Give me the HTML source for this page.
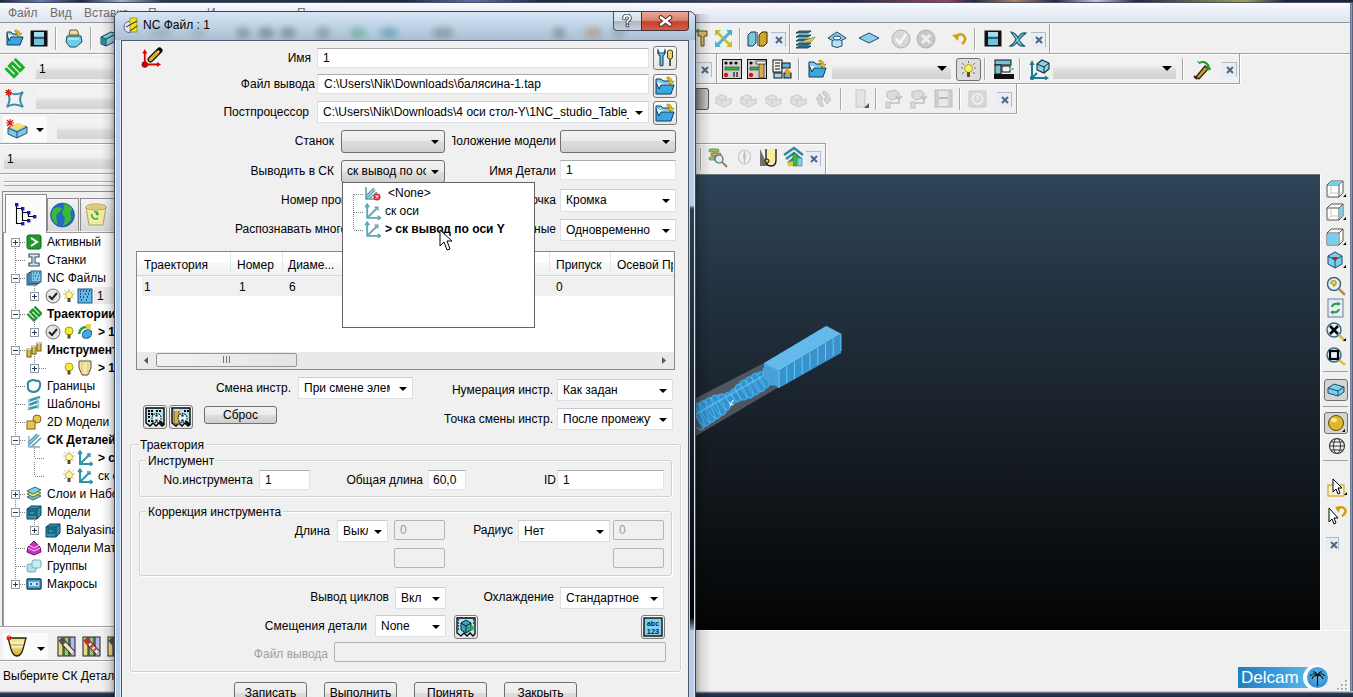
<!DOCTYPE html>
<html><head><meta charset="utf-8">
<style>
*{margin:0;padding:0;box-sizing:border-box}
html,body{width:1353px;height:697px;overflow:hidden;background:#f0f0f0;font-family:"Liberation Sans",sans-serif;font-size:12px;color:#000}
.a{position:absolute}
.t{position:absolute;white-space:nowrap;line-height:14px}
.r{text-align:right}
.fld{position:absolute;background:#fff;border:1px solid #dfe3e8;border-top-color:#a9adb3}
.fld span{position:absolute;left:5px;top:3px;line-height:14px;white-space:nowrap}
.dis{position:absolute;background:#f0f0f0;border:1px solid #b4b4b4;border-radius:2px}
.dis span{position:absolute;left:5px;top:3px;line-height:14px;color:#9a9a9a}
.cmb{position:absolute;border:1px solid #707070;border-radius:3px;background:linear-gradient(#f2f2f2 0,#ebebeb 50%,#dddddd 50%,#cfcfcf 100%)}
.dd{position:absolute;background:#fff;border:1px solid #dcdfe3;border-top-color:#c8ccd0}
.dd span,.cmb span{position:absolute;left:5px;top:3px;line-height:14px;white-space:nowrap;overflow:hidden}
.arr{position:absolute;width:0;height:0;border-left:4px solid transparent;border-right:4px solid transparent;border-top:4px solid #000}
.btn{position:absolute;border:1px solid #707070;border-radius:3px;background:linear-gradient(#f2f2f2 0,#ebebeb 50%,#dddddd 50%,#cfcfcf 100%);text-align:center;line-height:15px}
.ibtn{position:absolute;border:1px solid #7a7a7a;border-radius:3px;background:linear-gradient(#fafafa,#e4e4e4)}
.sep{position:absolute;width:2px;border-left:1px solid #a0a0a0;border-right:1px solid #fff}
.hl{position:absolute;height:2px;border-top:1px solid #a0a0a0;border-bottom:1px solid #fff}
.xb{position:absolute;width:15px;height:16px;border:1px solid #b9c9dc;border-left-color:#fff;border-top-color:#fff;background:#e8eef5;color:#4a6a8c;font-size:13px;font-weight:bold;line-height:13px;text-align:center}
.grp{position:absolute;border:1px solid #d0d0d0;border-radius:3px;box-shadow:inset 1px 1px 0 #fff,1px 1px 0 #fff}
.gl{position:absolute;background:#f0f0f0;padding:0 2px;line-height:14px;white-space:nowrap}
.tree .t{line-height:14px}
</style></head><body>


<!-- top desktop strip -->
<div class="a" style="left:0;top:0;width:1353px;height:3px;background:linear-gradient(90deg,#1c2740 0,#6a78b0 3%,#1c2740 6%,#a0b0c8 9%,#2a3550 12%,#1d2a45 30%,#5a70a8 35%,#1d2a45 40%,#3a4560 55%,#202a48 62%,#a04050 70%,#202a48 72%,#b08060 75%,#202a48 78%,#c0c8d8 81%,#202a48 84%,#a0a050 92%,#1a2540 95%)"></div><div class="a" style="left:0;top:2px;width:1353px;height:1px;background:#4a5268"></div>
<!-- menubar -->
<div class="a" style="left:0;top:3px;width:1350px;height:20px;background:linear-gradient(#fbfbfd 0,#eef1f8 30%,#dde3ee 100%)"></div>
<div class="a" style="left:0;top:22px;width:1350px;height:1px;background:#8f96a0"></div>
<div class="t" style="left:8px;top:6px;color:#6d6d6d">Файл</div>
<div class="t" style="left:50px;top:6px;color:#6d6d6d">Вид</div>
<div class="t" style="left:84px;top:6px;color:#6d6d6d">Вставка</div>

<!-- right window border -->
<div class="a" style="left:1350px;top:3px;width:3px;height:694px;background:linear-gradient(90deg,#5f6b85,#8895b0,#3d4865)"></div>
<!-- bottom border -->
<div class="a" style="left:0;top:691px;width:1353px;height:6px;background:linear-gradient(#b8c4d4 0,#b8c4d4 1px,#2e3a55 2px,#1d2740)"></div>

<!-- viewport -->
<div class="a" style="left:695px;top:174px;width:625px;height:456px;background:linear-gradient(#2e4558 0%,#243444 22%,#1b242d 48%,#0f1418 74%,#030405 100%);border-top:1px solid #6f757c"></div>

<svg class="a" style="left:695px;top:174px" width="625" height="456" viewBox="0 0 625 456"><polygon points="1,224 69,189 84,213 1,262" fill="#7a7f88" opacity=".55"/><polygon points="7.4,255.3 30.1,240.1 37.6,231.2 44.0,227.6 54.9,224.8 70.7,215.8 74.5,211.4 79.4,210.8 84.9,207.7 75.1,190.3 69.5,193.5 66.6,197.4 60.8,198.4 45.0,207.4 37.0,215.4 30.7,219.0 19.3,220.9 -5.4,232.7" fill="#3a8ccc"/><ellipse cx="1.0" cy="244.0" rx="13.0" ry="5.9" transform="rotate(60.3 1.0 244.0)" fill="none" stroke="#3fd8ff" stroke-width=".8" opacity=".75"/><ellipse cx="6.6" cy="240.8" rx="12.5" ry="5.6" transform="rotate(60.3 6.6 240.8)" fill="none" stroke="#3fd8ff" stroke-width=".8" opacity=".75"/><ellipse cx="12.3" cy="237.6" rx="12.0" ry="5.4" transform="rotate(60.3 12.3 237.6)" fill="none" stroke="#3fd8ff" stroke-width=".8" opacity=".75"/><ellipse cx="17.9" cy="234.4" rx="11.6" ry="5.2" transform="rotate(60.3 17.9 234.4)" fill="none" stroke="#3fd8ff" stroke-width=".8" opacity=".75"/><ellipse cx="23.6" cy="231.1" rx="11.1" ry="5.0" transform="rotate(60.3 23.6 231.1)" fill="none" stroke="#3fd8ff" stroke-width=".8" opacity=".75"/><ellipse cx="29.2" cy="227.9" rx="9.1" ry="4.1" transform="rotate(60.3 29.2 227.9)" fill="none" stroke="#3fd8ff" stroke-width=".8" opacity=".75"/><ellipse cx="34.9" cy="224.7" rx="7.0" ry="3.1" transform="rotate(60.3 34.9 224.7)" fill="none" stroke="#3fd8ff" stroke-width=".8" opacity=".75"/><ellipse cx="40.5" cy="221.5" rx="7.0" ry="3.1" transform="rotate(60.3 40.5 221.5)" fill="none" stroke="#3fd8ff" stroke-width=".8" opacity=".75"/><ellipse cx="46.1" cy="218.3" rx="8.8" ry="4.0" transform="rotate(60.3 46.1 218.3)" fill="none" stroke="#3fd8ff" stroke-width=".8" opacity=".75"/><ellipse cx="51.8" cy="215.1" rx="10.0" ry="4.5" transform="rotate(60.3 51.8 215.1)" fill="none" stroke="#3fd8ff" stroke-width=".8" opacity=".75"/><ellipse cx="57.4" cy="211.9" rx="10.0" ry="4.5" transform="rotate(60.3 57.4 211.9)" fill="none" stroke="#3fd8ff" stroke-width=".8" opacity=".75"/><ellipse cx="63.1" cy="208.6" rx="10.0" ry="4.5" transform="rotate(60.3 63.1 208.6)" fill="none" stroke="#3fd8ff" stroke-width=".8" opacity=".75"/><ellipse cx="68.7" cy="205.4" rx="8.8" ry="3.9" transform="rotate(60.3 68.7 205.4)" fill="none" stroke="#3fd8ff" stroke-width=".8" opacity=".75"/><ellipse cx="74.4" cy="202.2" rx="9.9" ry="4.5" transform="rotate(60.3 74.4 202.2)" fill="none" stroke="#3fd8ff" stroke-width=".8" opacity=".75"/><ellipse cx="80.0" cy="199.0" rx="10.0" ry="4.5" transform="rotate(60.3 80.0 199.0)" fill="none" stroke="#3fd8ff" stroke-width=".8" opacity=".75"/><line x1="1.0" y1="240.0" x2="80.0" y2="195.0" stroke="#60c8f0" stroke-width="1.5" opacity=".7"/><polygon points="69,189 131,152 146,160 84,197" fill="#66b8ea"/><polygon points="84,197 146,160 146,179 84,214" fill="#3d90cc"/><polygon points="69,189 84,197 84,214 69,205" fill="#4aa0d8"/><line x1="84.0" y1="197.0" x2="84.0" y2="214.0" stroke="#44e0ff" stroke-width=".9"/><line x1="69.0" y1="189.0" x2="84.0" y2="197.0" stroke="#44d0f8" stroke-width=".6"/><line x1="91.8" y1="192.4" x2="91.8" y2="209.4" stroke="#44e0ff" stroke-width=".9"/><line x1="76.8" y1="184.4" x2="91.8" y2="192.4" stroke="#44d0f8" stroke-width=".6"/><line x1="99.5" y1="187.8" x2="99.5" y2="204.8" stroke="#44e0ff" stroke-width=".9"/><line x1="84.5" y1="179.8" x2="99.5" y2="187.8" stroke="#44d0f8" stroke-width=".6"/><line x1="107.2" y1="183.1" x2="107.2" y2="200.1" stroke="#44e0ff" stroke-width=".9"/><line x1="92.2" y1="175.1" x2="107.2" y2="183.1" stroke="#44d0f8" stroke-width=".6"/><line x1="115.0" y1="178.5" x2="115.0" y2="195.5" stroke="#44e0ff" stroke-width=".9"/><line x1="100.0" y1="170.5" x2="115.0" y2="178.5" stroke="#44d0f8" stroke-width=".6"/><line x1="122.8" y1="173.9" x2="122.8" y2="190.9" stroke="#44e0ff" stroke-width=".9"/><line x1="107.8" y1="165.9" x2="122.8" y2="173.9" stroke="#44d0f8" stroke-width=".6"/><line x1="130.5" y1="169.2" x2="130.5" y2="186.2" stroke="#44e0ff" stroke-width=".9"/><line x1="115.5" y1="161.2" x2="130.5" y2="169.2" stroke="#44d0f8" stroke-width=".6"/><line x1="138.2" y1="164.6" x2="138.2" y2="181.6" stroke="#44e0ff" stroke-width=".9"/><line x1="123.2" y1="156.6" x2="138.2" y2="164.6" stroke="#44d0f8" stroke-width=".6"/><line x1="146.0" y1="160.0" x2="146.0" y2="177.0" stroke="#44e0ff" stroke-width=".9"/><line x1="131.0" y1="152.0" x2="146.0" y2="160.0" stroke="#44d0f8" stroke-width=".6"/><path d="M34 228 l4 3 M38 226 l-3 6" stroke="#fff" stroke-width="1"/></svg>
<!-- right vertical toolbar panel -->
<div class="a" id="rtb" style="left:1320px;top:174px;width:30px;height:456px;background:#f0f0f0;border-left:1px solid #fff"></div>

<!-- status area bottom line -->
<div class="a" style="left:695px;top:630px;width:655px;height:1px;background:#fdfdfd"></div>

<!-- Delcam logo -->
<div class="a" style="left:1238px;top:667px;width:70px;height:21px;background:linear-gradient(90deg,#1f7fc0,#3b9ee0 60%,#58b5ea)"></div>
<div class="t" style="left:1241px;top:669px;font-size:17px;line-height:18px;color:#fff">Delcam</div>
<div class="a" style="left:1303px;top:665px;width:25px;height:25px;border-radius:50%;background:#fff"></div>
<div class="a" style="left:1307px;top:667px;width:21px;height:21px;border-radius:50%;background:radial-gradient(circle at 50% 40%,#5fb8ea,#2a83c4)"></div><svg class="a" style="left:1307px;top:667px" width="21" height="21" viewBox="0 0 21 21"><path d="M10.5 8 V19 M10.5 8 Q6 5 3 9 M10.5 8 Q15 5 18 9 M10.5 9 Q7 7 5 12 M10.5 9 Q14 7 16 12 M10.5 8 Q8 4 6 5 M10.5 8 Q13 4 15 5" fill="none" stroke="#111" stroke-width="1.1"/></svg>

<div class="a" style="left:1345px;top:680px;width:2px;height:2px;background:#a8b0bc;box-shadow:1px 1px 0 #fff"></div><div class="a" style="left:1345px;top:684px;width:2px;height:2px;background:#a8b0bc;box-shadow:1px 1px 0 #fff"></div><div class="a" style="left:1341px;top:684px;width:2px;height:2px;background:#a8b0bc;box-shadow:1px 1px 0 #fff"></div><div class="a" style="left:1345px;top:688px;width:2px;height:2px;background:#a8b0bc;box-shadow:1px 1px 0 #fff"></div><div class="a" style="left:1341px;top:688px;width:2px;height:2px;background:#a8b0bc;box-shadow:1px 1px 0 #fff"></div><div class="a" style="left:1337px;top:688px;width:2px;height:2px;background:#a8b0bc;box-shadow:1px 1px 0 #fff"></div>
<!-- LEFT PANEL -->
<svg class="a" style="left:6px;top:29px" width="18" height="17" viewBox="0 0 18 17"><path d="M1 5 L1 16 L14 16 L17 8 L5 8 L3 12z" fill="#3aa8e0" stroke="#0f3a5a"/><path d="M1 5 L1 3 L5 3 L7 5 L12 5 L12 8" fill="#7acaf0" stroke="#0f3a5a"/><path d="M9 1 Q14 1 14 5 L16 4 L13 8 L10 4 L12 4 Q12 3 9 3z" fill="#f0c020" stroke="#a07000" stroke-width=".6"/></svg>
<svg class="a" style="left:30px;top:30px" width="18" height="17" viewBox="0 0 18 17"><rect x="0.5" y="0.5" width="17" height="16" fill="#111"/><rect x="4" y="2" width="10" height="13" fill="#6ac4e0"/><rect x="4" y="7" width="10" height="2" fill="#3a5a6a"/><rect x="4" y="2" width="10" height="4" fill="#a8dcec"/></svg>
<div class="a" style="left:55px;top:27px;width:1px;height:23px;background:#a6a6a6"></div><div class="a" style="left:56px;top:27px;width:1px;height:23px;background:#fff"></div>
<svg class="a" style="left:65px;top:29px" width="18" height="19" viewBox="0 0 18 19"><path d="M5 1 H12 L14 6 H4z" fill="#f0e0a0" stroke="#3a3a20" stroke-width=".8"/><path d="M2 7 H16 L17 13 L11 18 H5 L1 13z" fill="#6ad0e8" stroke="#1a4a60"/><path d="M3 10 H14" stroke="#e8f8fc"/></svg>
<div class="a" style="left:90px;top:27px;width:1px;height:23px;background:#a6a6a6"></div><div class="a" style="left:91px;top:27px;width:1px;height:23px;background:#fff"></div>
<svg class="a" style="left:100px;top:30px" width="16" height="17" viewBox="0 0 16 17"><path d="M1 7 L11 2 L16 4 L16 11 L6 16 L1 14z" fill="#8ad0e0" stroke="#0a3a50"/><path d="M1 7 L6 9 L16 4 M6 9 V16" fill="none" stroke="#0a3a50"/><path d="M1.5 7.5 L6 9.5 L6 15.5 L1.5 13.5z" fill="#2a8aa0"/></svg>
<div class="t" style="left:148px;top:6px;color:#777">П</div>
<div class="t" style="left:207px;top:6px;color:#777">И</div>
<div class="t" style="left:297px;top:6px;color:#777">П</div>
<div class="a" style="left:0;top:53px;width:115px;height:1px;background:#a0a0a0"></div>
<div class="a" style="left:0;top:54px;width:115px;height:1px;background:#fff"></div>
<div class="a" style="left:0;top:83px;width:115px;height:1px;background:#a0a0a0"></div>
<div class="a" style="left:0;top:84px;width:115px;height:1px;background:#fff"></div>
<div class="a" style="left:0;top:113px;width:115px;height:1px;background:#a0a0a0"></div>
<div class="a" style="left:0;top:114px;width:115px;height:1px;background:#fff"></div>
<div class="a" style="left:0;top:143px;width:115px;height:1px;background:#a0a0a0"></div>
<div class="a" style="left:0;top:144px;width:115px;height:1px;background:#fff"></div>
<div class="a" style="left:0;top:173px;width:115px;height:1px;background:#a0a0a0"></div>
<div class="a" style="left:0;top:174px;width:115px;height:1px;background:#fff"></div>
<div class="a" style="left:36px;top:59px;width:80px;height:20px;background:linear-gradient(#f4f4f4 0,#f0f0f0 40%,#dcdcdc 60%,#d4d4d4 100%)"></div><div class="t" style="left:39px;top:62px;">1</div>
<div class="a" style="left:36px;top:89px;width:80px;height:20px;background:linear-gradient(#f4f4f4 0,#f0f0f0 40%,#dcdcdc 60%,#d4d4d4 100%)"></div>
<div class="a" style="left:57px;top:119px;width:60px;height:20px;background:linear-gradient(#f4f4f4 0,#f0f0f0 40%,#dcdcdc 60%,#d4d4d4 100%)"></div>
<div class="a" style="left:4px;top:149px;width:112px;height:20px;background:linear-gradient(#f4f4f4 0,#f0f0f0 40%,#dcdcdc 60%,#d4d4d4 100%)"></div><div class="t" style="left:7px;top:152px;">1</div>
<svg class="a" style="left:3px;top:58px" width="22" height="22" viewBox="0 0 20 20"><path d="M3 10 L10 17 L12.8 14.2 L5.8 7.2 L8.6 4.4 L15.6 11.4 L18.4 8.6 L11.4 1.6" fill="none" stroke="#1eb02a" stroke-width="2.7" stroke-linecap="round"/></svg>
<svg class="a" style="left:3px;top:88px" width="22" height="22" viewBox="0 0 22 22"><path d="M4 3 Q12 9 20 4 Q14 11 20 19 Q11 14 4 19 Q9 11 4 3z" fill="none" stroke="#3a8fa5" stroke-width="2"/><path d="M3 2l5 5M8 2L3 7M5.5 1v7M2 4.5h7" stroke="#d02020" stroke-width="1.2"/></svg>
<div class="a" style="left:3px;top:116px;width:44px;height:26px;background:#fbfbfb"></div>
<svg class="a" style="left:5px;top:118px" width="24" height="22" viewBox="0 0 24 22"><path d="M3 10 L13 6 L22 9 L22 15 L12 20 L3 16z" fill="#7ec8e0" stroke="#264f6a"/><path d="M3 10 L12 14 L22 9 M12 14 V20" fill="none" stroke="#264f6a"/><path d="M4 9 L13 5 L21 8 L12 12z" fill="#f2e070"/><path d="M2 2l6 6M8 2L2 8M5 1v8M1 5h8" stroke="#e02010" stroke-width="1.2"/></svg>
<div class="arr" style="left:36px;top:128px;border-left-width:4px;border-right-width:4px;border-top-width:4px"></div>
<div class="a" style="left:4px;top:181px;width:112px;height:1px;background:#a8a8a8"></div>
<div class="a" style="left:4px;top:185px;width:112px;height:1px;background:#a8a8a8"></div>
<div class="a" style="left:4px;top:182px;width:112px;height:1px;background:#fff"></div>
<div class="a" style="left:2px;top:191px;width:120px;height:437px;border:1px solid #8a8a8a;border-right:none;background:#f0f0f0"></div>
<div class="a" style="left:3px;top:232px;width:120px;height:394px;background:#fff;border-top:1px solid #9a9a9a;border-left:1px solid #9a9a9a"></div>
<div class="a" style="left:47px;top:198px;width:32px;height:33px;border:1px solid #8a8a8a;border-bottom:none;background:linear-gradient(#f3f3f3,#d8d8d8)"></div>
<div class="a" style="left:80px;top:198px;width:40px;height:33px;border:1px solid #8a8a8a;border-bottom:none;background:linear-gradient(#f3f3f3,#d8d8d8)"></div>
<div class="a" style="left:5px;top:194px;width:42px;height:39px;border:1px solid #8a8a8a;border-bottom:none;background:#fcfcfc"></div>
<svg class="a" style="left:13px;top:201px" width="25" height="26" viewBox="0 0 25 26"><path d="M3.5 3.5 V22.5 H9.5 M3.5 7.5 H9.5 V19.5 H15.5 M9.5 11.5 H15.5 V15.5 H21.5" fill="none" stroke="#000" stroke-width="1.1"/><rect x="2" y="2" width="3.4" height="3.4" fill="#1818d0"/><rect x="8" y="6" width="3.4" height="3.4" fill="#1818d0"/><rect x="14" y="10" width="3.4" height="3.4" fill="#1818d0"/><rect x="20" y="14" width="3.4" height="3.4" fill="#1818d0"/><rect x="14" y="18" width="3.4" height="3.4" fill="#1818d0"/><rect x="8" y="21" width="3.4" height="3.4" fill="#1818d0"/></svg>
<svg class="a" style="left:49px;top:202px" width="27" height="26" viewBox="0 0 27 26"><circle cx="13.5" cy="13" r="12" fill="#1f6cc0"/><path d="M4 7 Q9 4 13 6 Q12 10 9 11 Q6 14 8 19 Q9 23 7 22 Q2 17 2.5 12z M14 2 Q20 2 24 7 Q21 9 21 12 Q24 16 20 20 Q16 24 14 23 Q17 18 15 14 Q12 12 14 8 Q16 5 14 2z" fill="#3cb83c"/><circle cx="13.5" cy="13" r="12" fill="none" stroke="#1a4a80" stroke-width=".6"/></svg>
<svg class="a" style="left:84px;top:202px" width="24" height="25" viewBox="0 0 24 25"><path d="M2 5 H22 L19 23 H5z" fill="#f3eaa0" stroke="#b0a060"/><ellipse cx="12" cy="5" rx="10" ry="3" fill="#ece0a0" stroke="#b0a060"/><ellipse cx="12" cy="5" rx="8" ry="2" fill="#d8cc80"/><path d="M10 10 Q14 9 14 13 M14 13 l-2 -1.5 M9 16 Q12 18 14 16 M8 12 Q7 14 9 16" fill="none" stroke="#3aa83a" stroke-width="1.6"/></svg>
<div class="a" style="left:15px;top:246px;width:1px;height:338px;background-image:linear-gradient(#808080 50%,transparent 50%);background-size:1px 2px"></div>
<div class="a" style="left:16px;top:242px;width:10px;height:1px;background-image:linear-gradient(90deg,#808080 50%,transparent 50%);background-size:2px 1px"></div>
<svg class="a" style="left:11px;top:238px" width="9" height="9" viewBox="0 0 9 9"><rect x="0.5" y="0.5" width="8" height="8" fill="#fdfdfd" stroke="#8e9aa8"/><path d="M2 4.5h5" stroke="#2a3a5a"/><path d="M4.5 2v5" stroke="#2a3a5a"/></svg>
<svg class="a" style="left:26px;top:234px" width="16" height="16" viewBox="0 0 16 16"><rect x="1" y="1" width="14" height="14" rx="2" fill="#1e9a2a" stroke="#0d6a18"/><path d="M5 4 L11 8 L5 12" fill="none" stroke="#fff" stroke-width="2"/></svg>
<div class="t" style="left:47px;top:235px;">Активный</div>
<div class="a" style="left:16px;top:260px;width:10px;height:1px;background-image:linear-gradient(90deg,#808080 50%,transparent 50%);background-size:2px 1px"></div>
<svg class="a" style="left:26px;top:252px" width="16" height="16" viewBox="0 0 16 16"><path d="M3 2h10v3H9v6h4v3H3v-3h3V5H3z" fill="#d9e6ee" stroke="#34505f" stroke-width="1.2"/><rect x="6" y="6" width="3" height="4" fill="#8fb3c5"/></svg>
<div class="t" style="left:47px;top:253px;">Станки</div>
<div class="a" style="left:16px;top:278px;width:10px;height:1px;background-image:linear-gradient(90deg,#808080 50%,transparent 50%);background-size:2px 1px"></div>
<svg class="a" style="left:11px;top:274px" width="9" height="9" viewBox="0 0 9 9"><rect x="0.5" y="0.5" width="8" height="8" fill="#fdfdfd" stroke="#8e9aa8"/><path d="M2 4.5h5" stroke="#2a3a5a"/></svg>
<svg class="a" style="left:26px;top:270px" width="16" height="16" viewBox="0 0 16 16"><rect x="1" y="4" width="10" height="11" fill="#5aa7d8" stroke="#27577a"/><rect x="3" y="2.5" width="10" height="11" fill="#6cb8e4" stroke="#27577a"/><rect x="5" y="1" width="10" height="11" fill="#7cc6ee" stroke="#27577a"/><path d="M7 3h1M10 3h1M13 3h1M7 6h1M9 6h1M12 6h1M7 9h1M11 9h1" stroke="#163a55" stroke-width="1.2"/></svg>
<div class="t" style="left:47px;top:271px;">NC Файлы</div>
<div class="a" style="left:34px;top:282px;width:1px;height:14px;background-image:linear-gradient(#808080 50%,transparent 50%);background-size:1px 2px"></div>
<svg class="a" style="left:30px;top:292px" width="9" height="9" viewBox="0 0 9 9"><rect x="0.5" y="0.5" width="8" height="8" fill="#fdfdfd" stroke="#8e9aa8"/><path d="M2 4.5h5" stroke="#2a3a5a"/><path d="M4.5 2v5" stroke="#2a3a5a"/></svg>
<svg class="a" style="left:45px;top:288px" width="16" height="16" viewBox="0 0 16 16"><circle cx="8" cy="8" r="7" fill="#e6e6e6" stroke="#6f6f6f"/><path d="M4 8l3 3 5-6" fill="none" stroke="#222" stroke-width="2"/></svg>
<svg class="a" style="left:61px;top:288px" width="16" height="16" viewBox="0 0 16 16"><path d="M8 1v2M2 6h2M12 6h2M3 2l1.5 1.5M13 2l-1.5 1.5M3 11l1.5-1.5M13 11l-1.5-1.5" stroke="#b9b9b9"/><circle cx="8" cy="7" r="3.5" fill="#fff59a" stroke="#c8b84a"/><rect x="6.5" y="10" width="3" height="4" fill="#5a4a2a"/></svg>
<svg class="a" style="left:77px;top:288px" width="16" height="16" viewBox="0 0 16 16"><rect x="1" y="1" width="14" height="14" fill="#63b8ea" stroke="#1f4f78"/><path d="M3 3h1M6 3h1M9 3h1M12 3h1M3 6h1M8 6h1M11 6h1M3 9h1M6 9h1M10 9h1M4 12h1M9 12h1" stroke="#103050" stroke-width="1.3"/></svg>
<div class="a" style="left:94px;top:287px;width:22px;height:17px;background:#ececec"></div>
<div class="t" style="left:97px;top:289px;">1</div>
<div class="a" style="left:16px;top:314px;width:10px;height:1px;background-image:linear-gradient(90deg,#808080 50%,transparent 50%);background-size:2px 1px"></div>
<svg class="a" style="left:11px;top:310px" width="9" height="9" viewBox="0 0 9 9"><rect x="0.5" y="0.5" width="8" height="8" fill="#fdfdfd" stroke="#8e9aa8"/><path d="M2 4.5h5" stroke="#2a3a5a"/></svg>
<svg class="a" style="left:26px;top:306px" width="16" height="16" viewBox="0 0 16 16"><path d="M2 8.5 L8 14.5 L10.4 12.1 L4.4 6.1 L6.8 3.7 L12.8 9.7 L15.2 7.3 L9.2 1.3" fill="none" stroke="#1a9a2a" stroke-width="2.4" stroke-linecap="round"/></svg>
<div class="t" style="left:47px;top:307px;font-weight:bold;">Траектории</div>
<div class="a" style="left:34px;top:318px;width:1px;height:14px;background-image:linear-gradient(#808080 50%,transparent 50%);background-size:1px 2px"></div>
<svg class="a" style="left:30px;top:328px" width="9" height="9" viewBox="0 0 9 9"><rect x="0.5" y="0.5" width="8" height="8" fill="#fdfdfd" stroke="#8e9aa8"/><path d="M2 4.5h5" stroke="#2a3a5a"/><path d="M4.5 2v5" stroke="#2a3a5a"/></svg>
<svg class="a" style="left:45px;top:324px" width="16" height="16" viewBox="0 0 16 16"><circle cx="8" cy="8" r="7" fill="#e6e6e6" stroke="#6f6f6f"/><path d="M4 8l3 3 5-6" fill="none" stroke="#222" stroke-width="2"/></svg>
<svg class="a" style="left:61px;top:324px" width="16" height="16" viewBox="0 0 16 16"><circle cx="8" cy="7" r="4" fill="#f4ea30" stroke="#a8a020"/><rect x="6.5" y="10.5" width="3" height="4" fill="#5a4a2a"/></svg>
<svg class="a" style="left:77px;top:324px" width="16" height="16" viewBox="0 0 16 16"><path d="M2 10 Q3 3 10 3" fill="none" stroke="#20a040" stroke-width="2.5"/><ellipse cx="10" cy="10" rx="5" ry="4" fill="#3aaee0" stroke="#1a5a80" transform="rotate(-35 10 10)"/><rect x="9" y="0" width="5" height="5" fill="#e8d060"/></svg>
<div class="t" style="left:98px;top:325px;font-weight:bold">&gt; 1</div>
<div class="a" style="left:16px;top:350px;width:10px;height:1px;background-image:linear-gradient(90deg,#808080 50%,transparent 50%);background-size:2px 1px"></div>
<svg class="a" style="left:11px;top:346px" width="9" height="9" viewBox="0 0 9 9"><rect x="0.5" y="0.5" width="8" height="8" fill="#fdfdfd" stroke="#8e9aa8"/><path d="M2 4.5h5" stroke="#2a3a5a"/></svg>
<svg class="a" style="left:26px;top:342px" width="16" height="16" viewBox="0 0 16 16"><rect x="1" y="7" width="4" height="8" fill="#e0c040" stroke="#6a5a20"/><rect x="6" y="4" width="4" height="8" fill="#e0c040" stroke="#6a5a20"/><rect x="11" y="1" width="4" height="8" fill="#e0c040" stroke="#6a5a20"/><rect x="1" y="6" width="4" height="2" fill="#ccc"/><rect x="6" y="3" width="4" height="2" fill="#ccc"/><rect x="11" y="0" width="4" height="2" fill="#ccc"/></svg>
<div class="t" style="left:47px;top:343px;font-weight:bold;">Инструменты</div>
<div class="a" style="left:34px;top:354px;width:1px;height:14px;background-image:linear-gradient(#808080 50%,transparent 50%);background-size:1px 2px"></div>
<svg class="a" style="left:30px;top:364px" width="9" height="9" viewBox="0 0 9 9"><rect x="0.5" y="0.5" width="8" height="8" fill="#fdfdfd" stroke="#8e9aa8"/><path d="M2 4.5h5" stroke="#2a3a5a"/><path d="M4.5 2v5" stroke="#2a3a5a"/></svg>
<div class="a" style="left:39px;top:368px;width:8px;height:1px;background-image:linear-gradient(90deg,#808080 50%,transparent 50%);background-size:2px 1px"></div>
<svg class="a" style="left:61px;top:360px" width="16" height="16" viewBox="0 0 16 16"><circle cx="8" cy="7" r="4" fill="#f4ea30" stroke="#a8a020"/><rect x="6.5" y="10.5" width="3" height="4" fill="#5a4a2a"/></svg>
<svg class="a" style="left:77px;top:360px" width="16" height="16" viewBox="0 0 16 16"><path d="M2 1h12v7l-3 7H5L2 8z" fill="#f3e6a8" stroke="#5a4a20"/><path d="M5 1v13M11 1v13" stroke="#d7c070" stroke-width="1"/></svg>
<div class="t" style="left:98px;top:361px;font-weight:bold">&gt; 1</div>
<div class="a" style="left:16px;top:386px;width:10px;height:1px;background-image:linear-gradient(90deg,#808080 50%,transparent 50%);background-size:2px 1px"></div>
<svg class="a" style="left:26px;top:378px" width="16" height="16" viewBox="0 0 16 16"><path d="M4 3 Q8 1 10 3 Q15 2 14 8 Q13 14 7 14 Q1 13 2 8 Q1 4 4 3z" fill="none" stroke="#2a8aa0" stroke-width="2"/></svg>
<div class="t" style="left:47px;top:379px;">Границы</div>
<div class="a" style="left:16px;top:404px;width:10px;height:1px;background-image:linear-gradient(90deg,#808080 50%,transparent 50%);background-size:2px 1px"></div>
<svg class="a" style="left:26px;top:396px" width="16" height="16" viewBox="0 0 16 16"><path d="M2 5 L8 3 L14 1 M3 9 L13 5 M2 13 L13 10" stroke="#3d95a8" stroke-width="2.5"/><path d="M3 3v10M12 2v11" stroke="#9ed3e0" stroke-width="1.5"/></svg>
<div class="t" style="left:47px;top:397px;">Шаблоны</div>
<div class="a" style="left:16px;top:422px;width:10px;height:1px;background-image:linear-gradient(90deg,#808080 50%,transparent 50%);background-size:2px 1px"></div>
<svg class="a" style="left:26px;top:414px" width="16" height="16" viewBox="0 0 16 16"><circle cx="11" cy="5" r="4" fill="#e8c84a" stroke="#7a6020"/><rect x="1" y="7" width="8" height="8" fill="#e8c84a" stroke="#7a6020"/></svg>
<div class="t" style="left:47px;top:415px;">2D Модели</div>
<div class="a" style="left:16px;top:440px;width:10px;height:1px;background-image:linear-gradient(90deg,#808080 50%,transparent 50%);background-size:2px 1px"></div>
<svg class="a" style="left:11px;top:436px" width="9" height="9" viewBox="0 0 9 9"><rect x="0.5" y="0.5" width="8" height="8" fill="#fdfdfd" stroke="#8e9aa8"/><path d="M2 4.5h5" stroke="#2a3a5a"/></svg>
<svg class="a" style="left:26px;top:432px" width="16" height="16" viewBox="0 0 16 16"><path d="M2 14 L13 3 M5 15 L15 6 M2 11 L11 2" stroke="#4aa0b0" stroke-width="1.6"/><path d="M3 4v11h11" fill="none" stroke="#6fb8c8" stroke-width="1.4"/></svg>
<div class="t" style="left:47px;top:433px;font-weight:bold;">СК Деталей</div>
<div class="a" style="left:34px;top:444px;width:1px;height:14px;background-image:linear-gradient(#808080 50%,transparent 50%);background-size:1px 2px"></div>
<div class="a" style="left:35px;top:458px;width:10px;height:1px;background-image:linear-gradient(90deg,#808080 50%,transparent 50%);background-size:2px 1px"></div>
<svg class="a" style="left:61px;top:450px" width="16" height="16" viewBox="0 0 16 16"><path d="M8 1v2M2 6h2M12 6h2M3 2l1.5 1.5M13 2l-1.5 1.5M3 11l1.5-1.5M13 11l-1.5-1.5" stroke="#b9b9b9"/><circle cx="8" cy="7" r="3.5" fill="#fff59a" stroke="#c8b84a"/><rect x="6.5" y="10" width="3" height="4" fill="#5a4a2a"/></svg>
<svg class="a" style="left:77px;top:450px" width="16" height="16" viewBox="0 0 16 16"><path d="M3 2 V14 H15 M3 14 L12 5" fill="none" stroke="#2f95a8" stroke-width="2"/><path d="M1 4 L3 1 L5 4 M13 12 L15.5 14 L13 16 M10 4 L13 4 L13 7" fill="none" stroke="#2f95a8" stroke-width="1.5"/></svg>
<div class="t" style="left:98px;top:451px;font-weight:bold;">&gt; ск вывод</div>
<div class="a" style="left:34px;top:462px;width:1px;height:14px;background-image:linear-gradient(#808080 50%,transparent 50%);background-size:1px 2px"></div>
<div class="a" style="left:35px;top:476px;width:10px;height:1px;background-image:linear-gradient(90deg,#808080 50%,transparent 50%);background-size:2px 1px"></div>
<svg class="a" style="left:61px;top:468px" width="16" height="16" viewBox="0 0 16 16"><path d="M8 1v2M2 6h2M12 6h2M3 2l1.5 1.5M13 2l-1.5 1.5M3 11l1.5-1.5M13 11l-1.5-1.5" stroke="#b9b9b9"/><circle cx="8" cy="7" r="3.5" fill="#fff59a" stroke="#c8b84a"/><rect x="6.5" y="10" width="3" height="4" fill="#5a4a2a"/></svg>
<svg class="a" style="left:77px;top:468px" width="16" height="16" viewBox="0 0 16 16"><path d="M3 2 V14 H15 M3 14 L12 5" fill="none" stroke="#2f95a8" stroke-width="2"/><path d="M1 4 L3 1 L5 4 M13 12 L15.5 14 L13 16 M10 4 L13 4 L13 7" fill="none" stroke="#2f95a8" stroke-width="1.5"/></svg>
<div class="t" style="left:98px;top:469px;">ск оси</div>
<div class="a" style="left:16px;top:494px;width:10px;height:1px;background-image:linear-gradient(90deg,#808080 50%,transparent 50%);background-size:2px 1px"></div>
<svg class="a" style="left:11px;top:490px" width="9" height="9" viewBox="0 0 9 9"><rect x="0.5" y="0.5" width="8" height="8" fill="#fdfdfd" stroke="#8e9aa8"/><path d="M2 4.5h5" stroke="#2a3a5a"/><path d="M4.5 2v5" stroke="#2a3a5a"/></svg>
<svg class="a" style="left:26px;top:486px" width="16" height="16" viewBox="0 0 16 16"><path d="M1 11 L9 7 L15 10 L7 14z" fill="#6cc0d0" stroke="#2a6a7a"/><path d="M1 8 L9 4 L15 7 L7 11z" fill="#f0e86a" stroke="#6a6a2a"/><path d="M1 5 L9 1 L15 4 L7 8z" fill="#7fd0e0" stroke="#2a6a7a"/></svg>
<div class="t" style="left:47px;top:487px;">Слои и Наборы</div>
<div class="a" style="left:16px;top:512px;width:10px;height:1px;background-image:linear-gradient(90deg,#808080 50%,transparent 50%);background-size:2px 1px"></div>
<svg class="a" style="left:11px;top:508px" width="9" height="9" viewBox="0 0 9 9"><rect x="0.5" y="0.5" width="8" height="8" fill="#fdfdfd" stroke="#8e9aa8"/><path d="M2 4.5h5" stroke="#2a3a5a"/></svg>
<svg class="a" style="left:26px;top:504px" width="16" height="16" viewBox="0 0 16 16"><path d="M1 5 L5 2 H15 V11 L11 15 H1z" fill="#2a95b0" stroke="#0f3f55"/><path d="M1 5 H11 V15 M11 5 L15 2" fill="none" stroke="#0f3f55"/><rect x="3" y="7" width="6" height="4" fill="none" stroke="#0f3f55"/></svg>
<div class="t" style="left:47px;top:505px;">Модели</div>
<div class="a" style="left:34px;top:516px;width:1px;height:14px;background-image:linear-gradient(#808080 50%,transparent 50%);background-size:1px 2px"></div>
<svg class="a" style="left:30px;top:526px" width="9" height="9" viewBox="0 0 9 9"><rect x="0.5" y="0.5" width="8" height="8" fill="#fdfdfd" stroke="#8e9aa8"/><path d="M2 4.5h5" stroke="#2a3a5a"/><path d="M4.5 2v5" stroke="#2a3a5a"/></svg>
<svg class="a" style="left:45px;top:522px" width="16" height="16" viewBox="0 0 16 16"><path d="M1 5 L5 2 H15 V11 L11 15 H1z" fill="#2a95b0" stroke="#0f3f55"/><path d="M1 5 H11 V15 M11 5 L15 2" fill="none" stroke="#0f3f55"/><rect x="3" y="7" width="6" height="4" fill="none" stroke="#0f3f55"/></svg>
<div class="t" style="left:66px;top:523px;">Balyasina</div>
<div class="a" style="left:16px;top:548px;width:10px;height:1px;background-image:linear-gradient(90deg,#808080 50%,transparent 50%);background-size:2px 1px"></div>
<svg class="a" style="left:26px;top:540px" width="16" height="16" viewBox="0 0 16 16"><path d="M8 1 L11 4 L14 7 L15 12 L8 15 L1 12 L2 7 L5 4z" fill="#cc30c0" stroke="#6a106a"/><path d="M2 8 L8 11 L14 8 M3 5 L8 8 L13 5" fill="none" stroke="#fff" stroke-width=".8"/></svg>
<div class="t" style="left:47px;top:541px;">Модели Материала</div>
<div class="a" style="left:16px;top:566px;width:10px;height:1px;background-image:linear-gradient(90deg,#808080 50%,transparent 50%);background-size:2px 1px"></div>
<svg class="a" style="left:26px;top:558px" width="16" height="16" viewBox="0 0 16 16"><rect x="1" y="6" width="9" height="8" rx="2" fill="#b0e0e8" stroke="#70b0c0"/><rect x="6" y="2" width="9" height="8" rx="2" fill="#c8ecf2" stroke="#70b0c0"/></svg>
<div class="t" style="left:47px;top:559px;">Группы</div>
<div class="a" style="left:16px;top:584px;width:10px;height:1px;background-image:linear-gradient(90deg,#808080 50%,transparent 50%);background-size:2px 1px"></div>
<svg class="a" style="left:11px;top:580px" width="9" height="9" viewBox="0 0 9 9"><rect x="0.5" y="0.5" width="8" height="8" fill="#fdfdfd" stroke="#8e9aa8"/><path d="M2 4.5h5" stroke="#2a3a5a"/><path d="M4.5 2v5" stroke="#2a3a5a"/></svg>
<svg class="a" style="left:26px;top:576px" width="16" height="16" viewBox="0 0 16 16"><rect x="1" y="3" width="14" height="10" rx="1" fill="#4aa8d8" stroke="#14385a" stroke-width="1.3"/><rect x="3" y="6" width="10" height="4" fill="#bfe6f5"/><circle cx="5" cy="8" r="1" fill="#14385a"/><circle cx="11" cy="8" r="1" fill="#14385a"/></svg>
<div class="t" style="left:47px;top:577px;">Макросы</div>
<div class="a" style="left:0;top:626px;width:120px;height:1px;background:#a0a0a0"></div>
<div class="a" style="left:0;top:627px;width:120px;height:1px;background:#fff"></div>
<div class="a" style="left:3px;top:633px;width:45px;height:26px;background:#fbfbfb"></div>
<svg class="a" style="left:5px;top:634px" width="24" height="24" viewBox="0 0 24 24"><defs><linearGradient id="tg" x1="0" x2="0" y1="0" y2="1"><stop offset="0" stop-color="#f0dc70"/><stop offset=".45" stop-color="#fff8d0"/><stop offset=".6" stop-color="#e8d070"/><stop offset="1" stop-color="#c8a830"/></linearGradient></defs><path d="M3 4 H21 L18 15 Q16 22 12 22 Q8 22 6 15z" fill="url(#tg)" stroke="#2a2000" stroke-width="1.3"/><path d="M5 11 H19" stroke="#8a7a30" stroke-width=".8"/><path d="M2 2l4 4M6 2L2 6M4 1v6M1 4h6" stroke="#e02010" stroke-width="1"/></svg>
<div class="arr" style="left:37px;top:647px"></div>
<svg class="a" style="left:57px;top:636px" width="20" height="21" viewBox="0 0 20 21"><rect x="1" y="1" width="5" height="19" fill="#e8d880" stroke="#222"/><rect x="7" y="1" width="5" height="19" fill="#8fc870" stroke="#222"/><rect x="13" y="1" width="5" height="19" fill="#b8b8f0" stroke="#222"/><path d="M5 5 L16 17" stroke="#222" stroke-width="5.5"/><path d="M5 5 L16 17" stroke="#f0e8c0" stroke-width="3.5"/><path d="M3 3 L7.5 7.5" stroke="#505050" stroke-width="5"/></svg>
<svg class="a" style="left:82px;top:636px" width="20" height="21" viewBox="0 0 20 21"><rect x="1" y="1" width="5" height="19" fill="#e8d880" stroke="#222"/><rect x="7" y="1" width="5" height="19" fill="#8fc870" stroke="#222"/><rect x="13" y="1" width="5" height="19" fill="#b8b8f0" stroke="#222"/><path d="M5 5 L16 17" stroke="#222" stroke-width="5.5"/><path d="M5 5 L16 17" stroke="#f0e8c0" stroke-width="3.5"/><path d="M3 3 L7.5 7.5" stroke="#c03030" stroke-width="5"/><path d="M9 9 L11 11 M12.5 12.5 L14 14" stroke="#d04040" stroke-width="3.5"/></svg>
<svg class="a" style="left:107px;top:636px" width="20" height="21" viewBox="0 0 20 21"><rect x="1" y="1" width="5" height="19" fill="#e8d880" stroke="#222"/><rect x="7" y="1" width="5" height="19" fill="#8fc870" stroke="#222"/><rect x="13" y="1" width="5" height="19" fill="#b8b8f0" stroke="#222"/><path d="M5 5 L16 17" stroke="#222" stroke-width="5.5"/><path d="M5 5 L16 17" stroke="#f0e8c0" stroke-width="3.5"/><path d="M3 3 L7.5 7.5" stroke="#505050" stroke-width="5"/></svg>
<div class="a" style="left:0;top:660px;width:120px;height:1px;background:#a0a0a0"></div>
<div class="a" style="left:0;top:661px;width:120px;height:1px;background:#fff"></div>
<div class="t" style="left:3px;top:669px;">Выберите СК Детали</div>

<!-- TOP TOOLBARS -->
<div class="a" style="left:695px;top:53px;width:655px;height:1px;background:#a0a0a0"></div><div class="a" style="left:695px;top:54px;width:655px;height:1px;background:#fff"></div>
<div class="a" style="left:695px;top:83px;width:545px;height:1px;background:#a0a0a0"></div><div class="a" style="left:695px;top:84px;width:545px;height:1px;background:#fff"></div>
<div class="a" style="left:695px;top:113px;width:322px;height:1px;background:#a0a0a0"></div><div class="a" style="left:695px;top:114px;width:322px;height:1px;background:#fff"></div>
<div class="a" style="left:1049px;top:24px;width:1px;height:29px;background:#a0a0a0"></div><div class="a" style="left:1050px;top:24px;width:1px;height:29px;background:#fff"></div>
<div class="a" style="left:1239px;top:54px;width:1px;height:29px;background:#a0a0a0"></div><div class="a" style="left:1240px;top:54px;width:1px;height:29px;background:#fff"></div>
<div class="a" style="left:1016px;top:84px;width:1px;height:29px;background:#a0a0a0"></div><div class="a" style="left:1017px;top:84px;width:1px;height:29px;background:#fff"></div>
<div class="a" style="left:695px;top:143px;width:131px;height:1px;background:#a0a0a0"></div><div class="a" style="left:695px;top:144px;width:131px;height:1px;background:#fff"></div>
<div class="a" style="left:825px;top:144px;width:1px;height:30px;background:#a0a0a0"></div><div class="a" style="left:826px;top:144px;width:1px;height:30px;background:#fff"></div>
<svg class="a" style="left:696px;top:29px" width="13" height="18" viewBox="0 0 13 18"><path d="M2 2 H11 V7 H8 V17 H5 V7 H2z" fill="#d8c070" stroke="#5a4a10"/><path d="M0 3 L3 0" stroke="#30a030" stroke-width="2"/></svg>
<svg class="a" style="left:714px;top:29px" width="19" height="19" viewBox="0 0 19 19"><path d="M2 2 L17 17 M17 2 L2 17" stroke="#c8b830" stroke-width="2.5"/><path d="M1 1 H7 L1 7z M18 18 H12 L18 12z" fill="#c8b830"/><path d="M18 1 H12 L18 7z M1 18 H7 L1 12z" fill="#4ab0d0"/><path d="M10 9.5 L17 2.5 M9.5 10 L2.5 17" stroke="#4ab0d0" stroke-width="2.5"/></svg>
<div class="a" style="left:739px;top:28px;width:1px;height:22px;background:#a6a6a6"></div><div class="a" style="left:740px;top:28px;width:1px;height:22px;background:#fff"></div>
<svg class="a" style="left:747px;top:31px" width="21" height="16" viewBox="0 0 21 16"><path d="M1 4 L4 1 H9 V12 L6 15 H1z" fill="#7cc4e0" stroke="#1a3a50"/><path d="M12 4 L15 1 H20 V12 L17 15 H12z" fill="#d0a830" stroke="#3a2a00"/><path d="M10.5 1 V15" stroke="#30c030"/></svg>
<div class="a" style="left:771px;top:32px;width:15px;height:15px;background:#e6edf5;border-top:1px solid #b0bccc;border-right:1px solid #b0bccc"></div><svg class="a" style="left:775px;top:36px" width="8" height="8" viewBox="0 0 8 8"><path d="M1 1 L7 7 M7 1 L1 7" stroke="#4f6680" stroke-width="2"/></svg>
<div class="a" style="left:789px;top:24px;width:1px;height:29px;background:#a0a0a0"></div><div class="a" style="left:790px;top:24px;width:1px;height:29px;background:#fff"></div>
<svg class="a" style="left:795px;top:29px" width="21" height="20" viewBox="0 0 21 20"><path d="M1 4 L13 4 L16 2 L4 2z M1 8 L13 8 L16 6 L4 6z M1 12 L13 12 L16 10 L4 10z M1 16 L13 16 L16 14 L4 14z M1 19 L13 19 L16 17 L4 17z" fill="#2a8aa8" stroke="#0a2a3a" stroke-width=".8"/><path d="M8 12 L20 8 L17 12 L6 14z" fill="#e8e040" stroke="#6a6a20" stroke-width=".6"/></svg>
<svg class="a" style="left:827px;top:31px" width="20" height="18" viewBox="0 0 20 18"><path d="M10 1 L19 7 L10 12 L1 7z" fill="#8ad0e8" stroke="#1a4a68"/><ellipse cx="10" cy="7" rx="4" ry="2" fill="#e8f4fa" stroke="#1a4a68"/><path d="M5 10 V15 Q10 18 15 15 V10" fill="#b8e0f0" stroke="#1a4a68"/></svg>
<svg class="a" style="left:858px;top:32px" width="22" height="12" viewBox="0 0 22 12"><path d="M11 1 L21 6 L11 11 L1 6z" fill="#8ad0ec" stroke="#1a4a68"/></svg>
<svg class="a" style="left:891px;top:29px" width="20" height="20" viewBox="0 0 20 20"><circle cx="10" cy="10" r="9" fill="#d8d8d8" stroke="#b0b0b0"/><path d="M5 10 L9 14 L15 5" fill="none" stroke="#f8f8f8" stroke-width="2.5"/></svg>
<svg class="a" style="left:916px;top:29px" width="20" height="20" viewBox="0 0 20 20"><circle cx="10" cy="10" r="9" fill="#c8c8c8" stroke="#b0b0b0"/><path d="M6 6 L14 14 M14 6 L6 14" stroke="#f0f0f0" stroke-width="3"/></svg>
<svg class="a" style="left:952px;top:32px" width="15" height="14" viewBox="0 0 15 14"><path d="M4 5 Q8 0 12 4 Q15 8 10 12" fill="none" stroke="#d0a010" stroke-width="2.6"/><path d="M0 3 L6 9 L7 2z" fill="#d0a010"/></svg>
<div class="a" style="left:974px;top:28px;width:1px;height:22px;background:#a6a6a6"></div><div class="a" style="left:975px;top:28px;width:1px;height:22px;background:#fff"></div>
<svg class="a" style="left:984px;top:30px" width="18" height="17" viewBox="0 0 18 17"><rect x="0.5" y="0.5" width="17" height="16" fill="#111"/><rect x="4" y="2" width="10" height="13" fill="#6ac4e0"/><rect x="4" y="7" width="10" height="2" fill="#3a5a6a"/><rect x="4" y="2" width="10" height="4" fill="#a8dcec"/></svg>
<svg class="a" style="left:1008px;top:30px" width="20" height="18" viewBox="0 0 20 18"><path d="M3 2 Q8 3 10 8 Q13 2 18 3 Q13 7 11 10 Q14 15 17 16 Q11 17 9 12 Q6 17 2 16 Q7 13 8 9 Q5 5 3 2z" fill="#8ad4e8" stroke="#1a5a70" stroke-width="1.2"/></svg>
<div class="a" style="left:1031px;top:32px;width:15px;height:15px;background:#e6edf5;border-top:1px solid #b0bccc;border-right:1px solid #b0bccc"></div><svg class="a" style="left:1035px;top:36px" width="8" height="8" viewBox="0 0 8 8"><path d="M1 1 L7 7 M7 1 L1 7" stroke="#4f6680" stroke-width="2"/></svg>
<div class="a" style="left:697px;top:62px;width:15px;height:15px;background:#e6edf5;border-top:1px solid #b0bccc;border-right:1px solid #b0bccc"></div><svg class="a" style="left:701px;top:66px" width="8" height="8" viewBox="0 0 8 8"><path d="M1 1 L7 7 M7 1 L1 7" stroke="#4f6680" stroke-width="2"/></svg>
<div class="a" style="left:716px;top:54px;width:1px;height:29px;background:#a0a0a0"></div><div class="a" style="left:717px;top:54px;width:1px;height:29px;background:#fff"></div>
<svg class="a" style="left:722px;top:59px" width="20" height="20" viewBox="0 0 20 20"><rect x="0.5" y="0.5" width="19" height="19" fill="#d0d0d0" stroke="#111"/><circle cx="4" cy="4" r="1.6" fill="#111"/><circle cx="9" cy="4" r="1.6" fill="#111"/><circle cx="14" cy="4" r="1.6" fill="#111"/><rect x="3" y="8" width="14" height="3" fill="#30c030" stroke="#111" stroke-width=".5"/><circle cx="4" cy="16" r="2.2" fill="#e01010"/><path d="M12 13 V18 M15 13 V18" stroke="#111" stroke-width="1.2"/></svg>
<svg class="a" style="left:747px;top:59px" width="20" height="20" viewBox="0 0 20 20"><rect x="0.5" y="0.5" width="19" height="19" fill="#d0d0d0" stroke="#111"/><circle cx="4" cy="4" r="1.6" fill="#111"/><rect x="3" y="8" width="8" height="3" fill="#30c030" stroke="#111" stroke-width=".5"/><circle cx="4" cy="16" r="2.2" fill="#e01010"/><rect x="12" y="4" width="5" height="15" fill="#d8b040" stroke="#111" stroke-width=".6"/><rect x="9" y="2" width="10" height="3" fill="#eee" stroke="#111" stroke-width=".6"/></svg>
<svg class="a" style="left:772px;top:59px" width="20" height="20" viewBox="0 0 20 20"><rect x="1" y="1" width="9" height="12" fill="#f4f4f4" stroke="#111"/><path d="M3 4h5M3 7h5M3 10h5" stroke="#111"/><rect x="10" y="4" width="8" height="5" fill="#60b8d8" stroke="#111"/><rect x="2" y="14" width="8" height="5" fill="#a8d8ec" stroke="#111"/><rect x="12" y="14" width="7" height="5" fill="#60b8d8" stroke="#111"/><path d="M12 12 L15 9 L19 13 L16 17z" fill="#f0a020"/></svg>
<div class="a" style="left:798px;top:58px;width:1px;height:22px;background:#a6a6a6"></div><div class="a" style="left:799px;top:58px;width:1px;height:22px;background:#fff"></div>
<svg class="a" style="left:808px;top:59px" width="19" height="19" viewBox="0 0 19 19"><path d="M1 6 L1 18 L15 18 L18 9 L6 9 L4 13z" fill="#3aa8e0" stroke="#0f3a5a"/><path d="M1 6 L1 3 L6 3 L8 5 L14 5 L14 9" fill="#7acaf0" stroke="#0f3a5a"/><path d="M11 1 Q16 1 16 6 L18 5 L15 9 L12 5 L14 5 Q14 3 11 3z" fill="#f0c020" stroke="#a07000" stroke-width=".6"/></svg>
<div class="a" style="left:832px;top:57px;width:119px;height:22px;background:linear-gradient(#f4f4f4 0,#f0f0f0 40%,#dcdcdc 60%,#d2d2d2 100%)"></div><div class="arr" style="left:937px;top:66px;border-left-width:5px;border-right-width:5px;border-top-width:5px"></div>
<div class="a" style="left:956px;top:58px;width:25px;height:23px;border:1px solid #707070;border-radius:3px;background:#dcdcdc"></div>
<svg class="a" style="left:959px;top:60px" width="19" height="19" viewBox="0 0 19 19"><path d="M9.5 1 V3 M2 8 H4 M15 8 H17 M3 3 L5 5 M16 3 L14 5 M3 14 L5 12 M16 14 L14 12" stroke="#707070"/><circle cx="9.5" cy="8.5" r="4" fill="#f8f060" stroke="#b0a020"/><rect x="8" y="12" width="3" height="5" fill="#6a4a10"/></svg>
<div class="a" style="left:984px;top:58px;width:1px;height:22px;background:#a6a6a6"></div><div class="a" style="left:985px;top:58px;width:1px;height:22px;background:#fff"></div>
<svg class="a" style="left:993px;top:59px" width="22" height="21" viewBox="0 0 22 21"><rect x="2" y="1" width="16" height="5" fill="#7ac0d8" stroke="#111"/><rect x="2" y="6" width="6" height="9" fill="#7ac0d8" stroke="#111"/><rect x="9" y="7" width="8" height="6" fill="#f0f0f0" stroke="#111"/><rect x="1" y="15" width="20" height="5" fill="#111"/><path d="M16 10 H21" stroke="#7ac0d8" stroke-width="2"/></svg>
<div class="a" style="left:1019px;top:58px;width:1px;height:22px;background:#a6a6a6"></div><div class="a" style="left:1020px;top:58px;width:1px;height:22px;background:#fff"></div>
<svg class="a" style="left:1028px;top:58px" width="22" height="22" viewBox="0 0 22 22"><path d="M4 20 V5 M4 20 H19 M4 20 L9 15" fill="none" stroke="#1f7a90" stroke-width="2"/><path d="M1.5 7 L4 2 L6.5 7z M17 17.5 L21 20 L17 22.5z" fill="#1f7a90"/><circle cx="4" cy="20" r="2.2" fill="#1f7a90"/><path d="M9 6 L14 2 L21 5 L21 11 L16 15 L9 12z" fill="#8ad0e0" stroke="#103040" stroke-width="1.1"/><path d="M9 6 L16 9 L21 5 M16 9 V15" fill="none" stroke="#103040"/></svg>
<div class="a" style="left:1053px;top:57px;width:123px;height:22px;background:linear-gradient(#f4f4f4 0,#f0f0f0 40%,#dcdcdc 60%,#d2d2d2 100%)"></div><div class="arr" style="left:1162px;top:66px;border-left-width:5px;border-right-width:5px;border-top-width:5px"></div>
<div class="a" style="left:1182px;top:58px;width:1px;height:22px;background:#a6a6a6"></div><div class="a" style="left:1183px;top:58px;width:1px;height:22px;background:#fff"></div>
<svg class="a" style="left:1191px;top:59px" width="21" height="21" viewBox="0 0 21 21"><path d="M5 18 L14 7 L17 10 L8 20z" fill="#c8a030" stroke="#2a2000" stroke-width="1.2"/><path d="M3 17 L6 20" stroke="#2a2000" stroke-width="2"/><path d="M8 4 Q15 1 18 8" fill="none" stroke="#20a030" stroke-width="2"/><path d="M16 6 L20 10 L17 11z M6 2 L9 5" fill="#20a030" stroke="#20a030"/></svg>
<div class="a" style="left:1222px;top:62px;width:15px;height:15px;background:#e6edf5;border-top:1px solid #b0bccc;border-right:1px solid #b0bccc"></div><svg class="a" style="left:1226px;top:66px" width="8" height="8" viewBox="0 0 8 8"><path d="M1 1 L7 7 M7 1 L1 7" stroke="#4f6680" stroke-width="2"/></svg>
<div class="a" style="left:694px;top:88px;width:15px;height:22px;border:1px solid #555;border-left:none;border-radius:0 3px 3px 0;background:linear-gradient(90deg,#777,#cfcfcf)"></div>
<svg class="a" style="left:714px;top:89px" width="19" height="19" viewBox="0 0 20 20"><path d="M2 9 L8 6 L13 8 L13 12 L18 10 L18 15 L10 19 L2 15z" fill="#e0e0e0" stroke="#c8c8c8"/><path d="M2 9 L8 12 L8 16 M8 12 L13 10" fill="none" stroke="#c8c8c8"/></svg>
<svg class="a" style="left:739px;top:89px" width="19" height="19" viewBox="0 0 20 20"><path d="M2 9 L8 6 L13 8 L13 12 L18 10 L18 15 L10 19 L2 15z" fill="#e0e0e0" stroke="#c8c8c8"/><path d="M2 9 L8 12 L8 16 M8 12 L13 10" fill="none" stroke="#c8c8c8"/></svg>
<svg class="a" style="left:764px;top:89px" width="19" height="19" viewBox="0 0 20 20"><path d="M2 9 L8 6 L13 8 L13 12 L18 10 L18 15 L10 19 L2 15z" fill="#e0e0e0" stroke="#c8c8c8"/><path d="M2 9 L8 12 L8 16 M8 12 L13 10" fill="none" stroke="#c8c8c8"/></svg>
<svg class="a" style="left:789px;top:89px" width="19" height="19" viewBox="0 0 20 20"><path d="M2 9 L8 6 L13 8 L13 12 L18 10 L18 15 L10 19 L2 15z" fill="#e0e0e0" stroke="#c8c8c8"/><path d="M2 9 L8 12 L8 16 M8 12 L13 10" fill="none" stroke="#c8c8c8"/></svg>
<svg class="a" style="left:814px;top:89px" width="18" height="19" viewBox="0 0 18 19"><path d="M9 2 Q16 4 15 10 L17 10 L13 15 L10 10 L12 10 Q12 6 9 5z M9 18 Q3 16 4 10 L2 10 L6 5 L9 10 L7 10 Q7 14 9 15z" fill="#d8d8d8" stroke="#c0c0c0"/></svg>
<div class="a" style="left:840px;top:88px;width:1px;height:22px;background:#a6a6a6"></div><div class="a" style="left:841px;top:88px;width:1px;height:22px;background:#fff"></div>
<svg class="a" style="left:853px;top:89px" width="16" height="20" viewBox="0 0 16 20"><rect x="3" y="1" width="9" height="17" fill="#e4e4e4" stroke="#c8c8c8"/><path d="M11 19 L16 19 L16 14z" fill="#555"/></svg>
<div class="a" style="left:875px;top:88px;width:1px;height:22px;background:#a6a6a6"></div><div class="a" style="left:876px;top:88px;width:1px;height:22px;background:#fff"></div>
<svg class="a" style="left:883px;top:89px" width="20" height="20" viewBox="0 0 20 20"><path d="M4 3 L12 1 L16 4 L16 9 L8 11 L4 8z" fill="#dcdcdc" stroke="#bdbdbd"/><path d="M4 14 H16 V10 M13 7 L16 10 L19 7" fill="none" stroke="#bdbdbd" stroke-width="1.6"/><rect x="3" y="13" width="4" height="6" fill="#dcdcdc" stroke="#bdbdbd"/></svg>
<svg class="a" style="left:908px;top:89px" width="20" height="20" viewBox="0 0 20 20"><path d="M4 3 L12 1 L16 4 L16 9 L8 11 L4 8z" fill="#dcdcdc" stroke="#bdbdbd"/><path d="M4 14 H16 V10 M13 7 L16 10 L19 7" fill="none" stroke="#bdbdbd" stroke-width="1.6"/><rect x="3" y="13" width="4" height="6" fill="#dcdcdc" stroke="#bdbdbd"/></svg>
<svg class="a" style="left:934px;top:89px" width="19" height="19" viewBox="0 0 19 19"><rect x="1" y="1" width="17" height="17" fill="#cfcfcf" stroke="#bdbdbd"/><rect x="5" y="2" width="9" height="15" fill="#e8e8e8"/><rect x="5" y="8" width="9" height="2" fill="#bbb"/></svg>
<div class="a" style="left:959px;top:88px;width:1px;height:22px;background:#a6a6a6"></div><div class="a" style="left:960px;top:88px;width:1px;height:22px;background:#fff"></div>
<svg class="a" style="left:968px;top:90px" width="19" height="18" viewBox="0 0 19 18"><rect x="1" y="1" width="17" height="16" rx="1" fill="#d8d8d8" stroke="#c8c8c8"/><circle cx="9.5" cy="9" r="5" fill="none" stroke="#f4f4f4" stroke-width="1.5"/><path d="M9.5 6 V10" stroke="#f4f4f4" stroke-width="1.5"/></svg>
<div class="a" style="left:997px;top:92px;width:15px;height:15px;background:#e6edf5;border-top:1px solid #b0bccc;border-right:1px solid #b0bccc"></div><svg class="a" style="left:1001px;top:96px" width="8" height="8" viewBox="0 0 8 8"><path d="M1 1 L7 7 M7 1 L1 7" stroke="#4f6680" stroke-width="2"/></svg>
<div class="a" style="left:700px;top:148px;width:1px;height:22px;background:#a6a6a6"></div><div class="a" style="left:701px;top:148px;width:1px;height:22px;background:#fff"></div>
<svg class="a" style="left:708px;top:148px" width="21" height="20" viewBox="0 0 21 20"><rect x="1" y="1" width="10" height="3" rx="1.5" fill="#98c860" stroke="#4a7020" stroke-width=".7"/><rect x="3" y="5" width="10" height="3" rx="1.5" fill="#d8a860" stroke="#6a4a20" stroke-width=".7"/><rect x="1" y="9" width="8" height="3" rx="1.5" fill="#98c860" stroke="#4a7020" stroke-width=".7"/><circle cx="11" cy="11" r="4" fill="#d8eef4" stroke="#3a6a80" stroke-width="1.2"/><path d="M14 14 L19 19" stroke="#a08040" stroke-width="2"/></svg>
<svg class="a" style="left:737px;top:148px" width="15" height="20" viewBox="0 0 15 20"><ellipse cx="7.5" cy="9" rx="6" ry="7" fill="none" stroke="#c8c8c8" stroke-width="1.2"/><path d="M7.5 2 L6 8 L7.5 17 L9 8z" fill="#c0c0c0"/></svg>
<svg class="a" style="left:759px;top:148px" width="19" height="20" viewBox="0 0 19 20"><path d="M1 1 L9 18 H1z" fill="#707070"/><path d="M7 1 V12 Q7 18 12 18 Q17 18 17 12 V1" fill="#f8eca0" stroke="#111" stroke-width="1.3"/><circle cx="8" cy="13" r="2" fill="#f0c060" stroke="#111"/></svg>
<svg class="a" style="left:783px;top:146px" width="21" height="21" viewBox="0 0 21 21"><path d="M1 9 L11 2 L20 9 M3 13 L11 7 L18 13 M5 17 L11 12" fill="none" stroke="#2a8aa8" stroke-width="2.4"/><rect x="10" y="8" width="4" height="12" fill="#40c030" stroke="#2a6a10" stroke-width=".6"/><rect x="15" y="12" width="4" height="8" fill="#8ad0f0" stroke="#2a6a90" stroke-width=".6"/><circle cx="7" cy="18" r="2.5" fill="#f0c030"/></svg>
<div class="a" style="left:806px;top:151px;width:15px;height:15px;background:#e6edf5;border-top:1px solid #b0bccc;border-right:1px solid #b0bccc"></div><svg class="a" style="left:810px;top:155px" width="8" height="8" viewBox="0 0 8 8"><path d="M1 1 L7 7 M7 1 L1 7" stroke="#4f6680" stroke-width="2"/></svg>
<svg class="a" style="left:1326px;top:180px" width="20" height="19" viewBox="0 0 20 19"><path d="M1 5 L5 1 H17 V13 L13 17 H1z" fill="#fff" stroke="#404040" stroke-width=".9"/><path d="M1 5 H13 V17 M13 5 L17 1" fill="none" stroke="#404040" stroke-width=".9"/><path d="M5 1 V13 H17 M5 13 L1 17" fill="none" stroke="#b0b0b0" stroke-width=".7"/><path d="M1.5 5 L5 1.5 H16.5 L13 5z" fill="#7ad0ec"/><path d="M17 17 L20 17 L20 14z" fill="#000"/></svg>
<svg class="a" style="left:1326px;top:203px" width="20" height="19" viewBox="0 0 20 19"><path d="M1 5 L5 1 H17 V13 L13 17 H1z" fill="#fff" stroke="#404040" stroke-width=".9"/><path d="M1 5 H13 V17 M13 5 L17 1" fill="none" stroke="#404040" stroke-width=".9"/><path d="M5 1 V13 H17 M5 13 L1 17" fill="none" stroke="#b0b0b0" stroke-width=".7"/><path d="M13.5 5 L16.5 2 V13 L13.5 16z" fill="#7ad0ec"/><path d="M17 17 L20 17 L20 14z" fill="#000"/></svg>
<svg class="a" style="left:1326px;top:228px" width="20" height="19" viewBox="0 0 20 19"><path d="M1 5 L5 1 H17 V13 L13 17 H1z" fill="#fff" stroke="#404040" stroke-width=".9"/><path d="M1 5 H13 V17 M13 5 L17 1" fill="none" stroke="#404040" stroke-width=".9"/><path d="M5 1 V13 H17 M5 13 L1 17" fill="none" stroke="#b0b0b0" stroke-width=".7"/><rect x="1.5" y="5.5" width="11" height="11" fill="#7ad0ec"/><path d="M17 17 L20 17 L20 14z" fill="#000"/></svg>
<svg class="a" style="left:1326px;top:251px" width="20" height="19" viewBox="0 0 20 19"><path d="M2 5 L9 1 L16 5 L16 13 L9 17 L2 13z" fill="#7ad0ec" stroke="#1a4a68"/><path d="M2 5 L9 9 L16 5 M9 9 V17" fill="none" stroke="#1a4a68"/><path d="M6 6 L12 6 L9 10z" fill="#e01010"/><path d="M17 17 L20 17 L20 14z" fill="#000"/></svg>
<svg class="a" style="left:1326px;top:276px" width="20" height="20" viewBox="0 0 20 20"><circle cx="8" cy="8" r="6.5" fill="#e8f4f8" stroke="#3a6a80" stroke-width="1.5"/><path d="M5 8 Q5 4 9 5 Q11 7 9 9 L7 8 L8 11" fill="none" stroke="#d0a020" stroke-width="1.8"/><path d="M13 13 L19 19" stroke="#c09040" stroke-width="2.5"/></svg>
<svg class="a" style="left:1326px;top:298px" width="20" height="20" viewBox="0 0 20 20"><rect x="2" y="1" width="15" height="18" fill="#e8eef8" stroke="#6a7aa0"/><path d="M5 9 Q6 4 12 5 L11 3 L15 6 L11 8 L12 7 Q8 6 7 9z M14 11 Q13 16 7 15 L8 17 L4 14 L8 12 L7 13 Q11 14 12 11z" fill="#20a030"/></svg>
<svg class="a" style="left:1326px;top:322px" width="20" height="20" viewBox="0 0 20 20"><circle cx="8" cy="8" r="7" fill="#e8f4f8" stroke="#3a6a80" stroke-width="1.5"/><path d="M4 4 L12 12 M12 4 L4 12" stroke="#000" stroke-width="2.5"/><path d="M13 13 L19 19" stroke="#d8c040" stroke-width="2.5"/><path d="M17 19 L20 19 L20 16z" fill="#000"/></svg>
<svg class="a" style="left:1326px;top:347px" width="20" height="19" viewBox="0 0 20 19"><circle cx="8" cy="8" r="7" fill="#e8f4f8" stroke="#3a6a80" stroke-width="1.5"/><rect x="4" y="4" width="8" height="8" fill="none" stroke="#000" stroke-width="2.2"/><path d="M13 13 L19 18" stroke="#d8c040" stroke-width="2.5"/></svg>
<div class="a" style="left:1323px;top:371px;width:25px;height:1px;background:#a0a0a0"></div>
<div class="a" style="left:1324px;top:379px;width:24px;height:22px;border:1px solid #707070;border-radius:3px;background:#d4d4d4"></div>
<svg class="a" style="left:1327px;top:382px" width="18" height="16" viewBox="0 0 18 16"><path d="M1 6 L7 2 L17 5 L17 10 L11 14 L1 11z" fill="#7ad0ec" stroke="#1a4a68"/><path d="M1 6 L11 9 L17 5 M11 9 V14" fill="none" stroke="#1a4a68"/></svg>
<div class="a" style="left:1323px;top:406px;width:25px;height:1px;background:#a0a0a0"></div>
<div class="a" style="left:1324px;top:412px;width:24px;height:22px;border:1px solid #707070;border-radius:3px;background:#d4d4d4"></div>
<svg class="a" style="left:1327px;top:414px" width="18" height="18" viewBox="0 0 18 18"><circle cx="9" cy="9" r="7.5" fill="#e0b830" stroke="#604a00"/><ellipse cx="7" cy="6" rx="3" ry="2" fill="#f8e8a0"/><path d="M15 18 L18 18 L18 15z" fill="#000"/></svg>
<svg class="a" style="left:1328px;top:437px" width="18" height="18" viewBox="0 0 18 18"><circle cx="9" cy="9" r="7.5" fill="none" stroke="#333" stroke-width="1.1"/><ellipse cx="9" cy="9" rx="3.5" ry="7.5" fill="none" stroke="#333"/><path d="M1.5 9 H16.5 M3 5 H15 M3 13 H15" stroke="#333"/></svg>
<div class="a" style="left:1323px;top:460px;width:25px;height:1px;background:#a0a0a0"></div>
<svg class="a" style="left:1327px;top:478px" width="20" height="20" viewBox="0 0 20 20"><rect x="1" y="7" width="16" height="11" fill="#fbf4d8" stroke="#d0a020" stroke-width="1.2"/><path d="M6 1 L6 14 L9 11 L11 16 L13 15 L11 10 L15 10z" fill="#fff" stroke="#000" stroke-width="1"/><path d="M17 17 L20 17 L20 14z" fill="#000"/></svg>
<svg class="a" style="left:1327px;top:504px" width="20" height="21" viewBox="0 0 20 21"><path d="M2 4 L2 18 L5 15 L7 20 L9 19 L7 14 L11 14z" fill="#fff" stroke="#000" stroke-width="1"/><path d="M10 6 Q14 1 18 5 Q20 9 15 12" fill="none" stroke="#d0a010" stroke-width="2.4"/><path d="M8 3 L12 9 L13 2z" fill="#d0a010"/></svg>
<div class="a" style="left:1326px;top:537px;width:13px;height:13px;background:#e6edf5;border-top:1px solid #b0bccc;border-right:1px solid #b0bccc"></div><svg class="a" style="left:1330px;top:541px" width="8" height="8" viewBox="0 0 8 8"><path d="M1 1 L7 7 M7 1 L1 7" stroke="#4f6680" stroke-width="2"/></svg>

<!-- DIALOG -->
<div id="dlg">
<!-- shadow -->
<div class="a" style="left:695px;top:14px;width:16px;height:683px;background:linear-gradient(90deg,rgba(0,0,0,.32),rgba(0,0,0,.12) 35%,rgba(0,0,0,0))"></div>
<div class="a" style="left:102px;top:14px;width:12px;height:683px;background:linear-gradient(90deg,rgba(0,0,0,0),rgba(0,0,0,.10) 65%,rgba(0,0,0,.28))"></div>
<!-- frame -->
<div class="a" style="left:114px;top:11px;width:582px;height:700px;border:1px solid #3c4250;border-radius:7px 7px 0 0;background:linear-gradient(#c8dcf0 0,#b8d2ec 40px,#aecbe8 300px,#b4cfea 100%)"></div>
<div class="a" style="left:115px;top:20px;width:1px;height:677px;background:rgba(255,255,255,.75)"></div><div class="a" style="left:120px;top:40px;width:1px;height:657px;background:rgba(255,255,255,.55)"></div><div class="a" style="left:694px;top:20px;width:1px;height:677px;background:rgba(255,255,255,.6)"></div>
<div class="a" style="left:115px;top:12px;width:580px;height:28px;border-radius:6px 6px 0 0;background:linear-gradient(#d6e4f2 0,#c4d7ea 40%,#a9bfd3 100%)"></div>
<div class="a" style="left:150px;top:27px;width:22px;height:12px;border-radius:50%;background:#8a9aa0;filter:blur(3px);opacity:.45"></div>
<div class="a" style="left:190px;top:27px;width:16px;height:12px;border-radius:50%;background:#90a0a8;filter:blur(3px);opacity:.45"></div>
<div class="a" style="left:236px;top:27px;width:14px;height:12px;border-radius:50%;background:#5a6a60;filter:blur(3px);opacity:.45"></div>
<div class="a" style="left:258px;top:27px;width:16px;height:12px;border-radius:50%;background:#4a5a60;filter:blur(3px);opacity:.45"></div>
<div class="a" style="left:280px;top:27px;width:16px;height:12px;border-radius:50%;background:#50606a;filter:blur(3px);opacity:.45"></div>
<div class="a" style="left:316px;top:27px;width:14px;height:12px;border-radius:50%;background:#607060;filter:blur(3px);opacity:.45"></div>
<div class="a" style="left:350px;top:27px;width:16px;height:12px;border-radius:50%;background:#40a070;filter:blur(3px);opacity:.45"></div>
<div class="a" style="left:380px;top:27px;width:18px;height:12px;border-radius:50%;background:#308a90;filter:blur(3px);opacity:.45"></div>
<div class="a" style="left:432px;top:27px;width:22px;height:12px;border-radius:50%;background:#607080;filter:blur(3px);opacity:.45"></div>
<div class="a" style="left:553px;top:27px;width:12px;height:12px;border-radius:50%;background:#506070;filter:blur(3px);opacity:.45"></div>
<div class="a" style="left:584px;top:27px;width:18px;height:12px;border-radius:50%;background:#b08050;filter:blur(3px);opacity:.45"></div>
<div class="a" style="left:612px;top:27px;width:14px;height:12px;border-radius:50%;background:#8090a0;filter:blur(3px);opacity:.45"></div>
<div class="a" style="left:690px;top:206px;width:4px;height:424px;background:linear-gradient(rgba(42,62,80,.3) 0,#2a3e50 3px,#1c2630 45%,#0a0e12 80%,#020304 97%,rgba(2,3,4,.2) 100%)"></div>
<!-- title -->
<div class="t" style="left:143px;top:18px;font-size:12px;color:#000">NC Файл : 1</div>
<!-- help / close -->
<div class="a" style="left:613px;top:12px;width:29px;height:19px;border:1px solid #4a5060;border-top:none;border-radius:0 0 0 4px;background:linear-gradient(#e8eef5 0,#d3dde8 50%,#a9b8c8 50%,#c4d0dc 100%)"></div>
<svg class="a" style="left:621px;top:14px" width="12" height="14" viewBox="0 0 12 14"><path d="M3 4.5 Q3 1.5 6 1.5 Q9 1.5 9 4.3 Q9 6 6.5 7 L6.5 8.5" fill="none" stroke="#3a4050" stroke-width="3.6" stroke-linecap="round"/><circle cx="6.5" cy="11.5" r="1.9" fill="#3a4050"/><path d="M3 4.5 Q3 1.5 6 1.5 Q9 1.5 9 4.3 Q9 6 6.5 7 L6.5 8.5" fill="none" stroke="#fff" stroke-width="1.8" stroke-linecap="round"/><circle cx="6.5" cy="11.5" r="1" fill="#fff"/></svg>
<div class="a" style="left:641px;top:12px;width:48px;height:19px;border:1px solid #4a3030;border-top:none;border-radius:0 0 4px 0;background:linear-gradient(#eaa79a 0,#d98370 45%,#c7402a 55%,#d3604c 100%)"></div>
<svg class="a" style="left:658px;top:15px" width="15" height="12" viewBox="0 0 15 12"><path d="M3 2.5 L12 9.5 M12 2.5 L3 9.5" stroke="#5a2a20" stroke-width="4.6" stroke-linecap="round"/><path d="M3 2.5 L12 9.5 M12 2.5 L3 9.5" stroke="#fff" stroke-width="2.6" stroke-linecap="round"/></svg>
<!-- client -->
<div class="a" style="left:121px;top:40px;width:568px;height:660px;background:#f0f0f0;border:1px solid #4e5866;border-bottom:none"></div>
<svg class="a" style="left:123px;top:17px" width="15" height="16" viewBox="0 0 15 16"><ellipse cx="6" cy="10" rx="5" ry="5.5" fill="#e8e8f0" stroke="#6060a0"/><rect x="7" y="1" width="7" height="14" fill="#f0e020" stroke="#807000" stroke-width=".6"/><path d="M3 10 L14 4 M7 14 L14 9" stroke="#222" stroke-width="1"/></svg>
<svg class="a" style="left:141px;top:47px" width="23" height="22" viewBox="0 0 23 22"><path d="M3.8 5 V17.5 H17" fill="none" stroke="#e00000" stroke-width="1.8"/><path d="M1.2 6.5 L3.8 2.3 L6.4 6.5z M16 15 L20 17.5 L16 20z" fill="#e00000"/><circle cx="3.8" cy="17.5" r="2.9" fill="#d00000" stroke="#800000" stroke-width=".6"/><path d="M9.5 12.5 L18.5 3.5" stroke="#000" stroke-width="6" stroke-linecap="round"/><path d="M9.5 12.5 L16.5 5.5" stroke="#d8b020" stroke-width="3.6" stroke-linecap="round"/><path d="M17.2 4.8 L18.2 3.8" stroke="#fff" stroke-width="1.8"/></svg>
<div class="t r" style="left:11px;width:300px;top:51px;">Имя</div>
<div class="fld" style="left:317px;top:48px;width:332px;height:20px;"><span style="left:5px;top:2px">1</span></div>
<div class="t r" style="left:15px;width:300px;top:77px;">Файл вывода</div>
<div class="fld" style="left:317px;top:74px;width:332px;height:20px;"><span style="left:6px;top:2px">C:\Users\Nik\Downloads\балясина-1.tap</span></div>
<div class="t r" style="left:9px;width:300px;top:105px;">Постпроцессор</div>
<div class="dd" style="left:317px;top:101px;width:332px;height:22px"><span style="top:3px;width:306px">C:\Users\Nik\Downloads\4 оси стол-Y\1NC_studio_Table_</span><div class="arr" style="left:317px;top:9px"></div></div>
<div class="ibtn" style="left:653px;top:46px;width:24px;height:24px"></div><svg class="a" style="left:655px;top:48px" width="20" height="20" viewBox="0 0 20 20"><path d="M3 2 Q2 6 5 8 L5 17 Q6 19 8 17 L8 8 Q11 6 10 2 L9 5 L4 5z" fill="#6ac0e0" stroke="#1a4a68" stroke-width="1.1"/><rect x="12.5" y="2" width="5" height="9" rx="2" fill="#e8d070" stroke="#4a3a10"/><path d="M15 11 V18" stroke="#5a5a5a" stroke-width="2"/></svg>
<div class="ibtn" style="left:653px;top:74px;width:24px;height:24px"></div><svg class="a" style="left:655px;top:76px" width="20" height="20" viewBox="0 0 20 20"><path d="M1 6 L1 18 L16 18 L19 9 L6 9 L4 13z" fill="#3aa8e0" stroke="#0f3a5a"/><path d="M1 6 L1 3 L6 3 L8 5 L15 5 L15 9" fill="#7acaf0" stroke="#0f3a5a"/><path d="M12 1 Q17 1 17 6 L19 5 L16 9 L13 5 L15 5 Q15 3 12 3z" fill="#f0c020" stroke="#a07000" stroke-width=".6"/></svg>
<div class="ibtn" style="left:653px;top:101px;width:24px;height:24px"></div><svg class="a" style="left:655px;top:103px" width="20" height="20" viewBox="0 0 20 20"><path d="M1 6 L1 18 L16 18 L19 9 L6 9 L4 13z" fill="#3aa8e0" stroke="#0f3a5a"/><path d="M1 6 L1 3 L6 3 L8 5 L15 5 L15 9" fill="#7acaf0" stroke="#0f3a5a"/><path d="M12 1 Q17 1 17 6 L19 5 L16 9 L13 5 L15 5 Q15 3 12 3z" fill="#f0c020" stroke="#a07000" stroke-width=".6"/></svg>
<div class="t r" style="left:34px;width:300px;top:134px;">Станок</div>
<div class="cmb" style="left:341px;top:130px;width:104px;height:23px"><span style="top:3px;width:82px"></span><div class="arr" style="left:89px;top:9px"></div></div>
<div class="a" style="left:452px;top:134px;width:104px;height:14px;overflow:hidden"><div class="t r" style="left:-200px;width:304px;top:0">Положение модели</div></div>
<div class="cmb" style="left:560px;top:130px;width:116px;height:23px"><span style="top:3px;width:94px"></span><div class="arr" style="left:101px;top:9px"></div></div>
<div class="t r" style="left:34px;width:300px;top:164px;">Выводить в СК</div>
<div class="cmb" style="left:341px;top:160px;width:104px;height:23px"><span style="top:3px;width:79px">ск вывод по оси Y</span><div class="arr" style="left:89px;top:9px"></div></div>
<div class="t r" style="left:256px;width:300px;top:164px;">Имя Детали</div>
<div class="fld" style="left:560px;top:160px;width:116px;height:20px;"><span style="left:5px;top:2px">1</span></div>
<div class="t" style="left:281px;top:193px;">Номер программы</div>
<div class="t r" style="left:256px;width:300px;top:193px;">Начальная точка</div>
<div class="dd" style="left:560px;top:189px;width:116px;height:23px"><span style="top:3px;width:94px">Кромка</span><div class="arr" style="left:101px;top:9px"></div></div>
<div class="t" style="left:235px;top:222px;">Распознавать многоосевые</div>
<div class="t r" style="left:256px;width:300px;top:222px;">Вращательные</div>
<div class="dd" style="left:560px;top:219px;width:116px;height:22px"><span style="top:3px;width:94px">Одновременно</span><div class="arr" style="left:101px;top:9px"></div></div>
<div class="a" style="left:136px;top:251px;width:539px;height:119px;background:#fff;border:1px solid #828790"></div>
<div class="a" style="left:137px;top:252px;width:537px;height:24px;background:linear-gradient(#ffffff 0,#ffffff 50%,#f7f8fa 50%,#f1f2f4 100%);border-bottom:1px solid #d5d5d5"></div>
<div class="a" style="left:230px;top:252px;width:1px;height:24px;background:#e3e5e8"></div>
<div class="a" style="left:282px;top:252px;width:1px;height:24px;background:#e3e5e8"></div>
<div class="a" style="left:549px;top:252px;width:1px;height:24px;background:#e3e5e8"></div>
<div class="a" style="left:610px;top:252px;width:1px;height:24px;background:#e3e5e8"></div>
<div class="a" style="left:137px;top:276px;width:537px;height:1px;background:#f3f3f3"></div>
<div class="t" style="left:144px;top:258px;">Траектория</div>
<div class="t" style="left:237px;top:258px;">Номер</div>
<div class="t" style="left:288px;top:258px;">Диаме...</div>
<div class="t" style="left:556px;top:258px;">Припуск</div>
<div class="a" style="left:617px;top:258px;width:56px;height:14px;overflow:hidden"><div class="t" style="left:0;top:0">Осевой Припуск</div></div>
<div class="a" style="left:142px;top:277px;width:532px;height:19px;background:#f0f0f0"></div>
<div class="t" style="left:144px;top:280px;">1</div>
<div class="t" style="left:239px;top:280px;">1</div>
<div class="t" style="left:289px;top:280px;">6</div>
<div class="t" style="left:556px;top:280px;">0</div>
<div class="a" style="left:137px;top:352px;width:537px;height:17px;background:#e9e9e9"></div>
<svg class="a" style="left:142px;top:356px" width="8" height="9" viewBox="0 0 8 9"><path d="M6 1 L2 4.5 L6 8z" fill="#555"/></svg>
<svg class="a" style="left:660px;top:356px" width="8" height="9" viewBox="0 0 8 9"><path d="M2 1 L6 4.5 L2 8z" fill="#555"/></svg>
<div class="a" style="left:156px;top:353px;width:141px;height:14px;border:1px solid #959595;border-radius:2px;background:linear-gradient(90deg,#f2f2f2,#e4e4e4)"></div>
<div class="a" style="left:223px;top:356px;width:7px;height:7px;border-left:1px solid #777;border-right:1px solid #777"></div><div class="a" style="left:226px;top:356px;width:1px;height:7px;background:#777"></div>
<div class="a" style="left:342px;top:182px;width:193px;height:146px;background:#fff;border:1px solid #646464"></div>
<div class="a" style="left:353px;top:194px;width:1px;height:36px;background-image:linear-gradient(#808080 50%,transparent 50%);background-size:1px 2px"></div>
<div class="a" style="left:354px;top:194px;width:10px;height:1px;background-image:linear-gradient(90deg,#808080 50%,transparent 50%);background-size:2px 1px"></div>
<div class="a" style="left:354px;top:212px;width:10px;height:1px;background-image:linear-gradient(90deg,#808080 50%,transparent 50%);background-size:2px 1px"></div>
<div class="a" style="left:354px;top:230px;width:10px;height:1px;background-image:linear-gradient(90deg,#808080 50%,transparent 50%);background-size:2px 1px"></div>
<svg class="a" style="left:363px;top:184px" width="18" height="18" viewBox="0 0 18 18"><path d="M3 3 V15 H16 M3 15 L12 6 M6 15 L14 8 M3 12 L11 4" fill="none" stroke="#5aa0b0" stroke-width="1.6"/><circle cx="14" cy="13" r="3.5" fill="#e02020"/><path d="M12.5 11.5l3 3M15.5 11.5l-3 3" stroke="#fff" stroke-width="1.1"/></svg>
<svg class="a" style="left:364px;top:203px" width="17" height="17" viewBox="0 0 16 16"><path d="M3 2 V14 H15 M3 14 L12 5" fill="none" stroke="#5aa8b8" stroke-width="1.8"/><path d="M1 4 L3 1 L5 4 M13 12 L15.5 14 L13 16 M10 4 L13 4 L13 7" fill="none" stroke="#5aa8b8" stroke-width="1.4"/></svg>
<svg class="a" style="left:364px;top:221px" width="17" height="17" viewBox="0 0 16 16"><path d="M3 2 V14 H15 M3 14 L12 5" fill="none" stroke="#5aa8b8" stroke-width="1.8"/><path d="M1 4 L3 1 L5 4 M13 12 L15.5 14 L13 16 M10 4 L13 4 L13 7" fill="none" stroke="#5aa8b8" stroke-width="1.4"/></svg>
<div class="t" style="left:388px;top:186px;">&lt;None&gt;</div>
<div class="t" style="left:385px;top:204px;">ск оси</div>
<div class="t" style="left:385px;top:222px;font-weight:bold">&gt; ск вывод по оси Y</div>
<svg class="a" style="left:439px;top:229px" width="14" height="24" viewBox="0 0 14 24"><path d="M1 1 L1 17 L5 13 L8 21 L11 20 L8 12 L13 12z" fill="#fff" stroke="#000" stroke-width="1"/></svg>
<div class="t r" style="left:-9px;width:300px;top:381px;">Смена инстр.</div>
<div class="dd" style="left:298px;top:377px;width:115px;height:22px"><span style="top:3px;width:86px">При смене элемента</span><div class="arr" style="left:100px;top:9px"></div></div>
<div class="t r" style="left:253px;width:300px;top:383px;">Нумерация инстр.</div>
<div class="dd" style="left:557px;top:379px;width:116px;height:22px"><span style="top:3px;width:94px">Как задан</span><div class="arr" style="left:101px;top:9px"></div></div>
<div class="t r" style="left:253px;width:300px;top:412px;">Точка смены инстр.</div>
<div class="dd" style="left:557px;top:408px;width:116px;height:22px"><span style="top:3px;width:88px">После промежуточной</span><div class="arr" style="left:101px;top:9px"></div></div>
<div class="ibtn" style="left:143px;top:405px;width:24px;height:24px"></div><svg class="a" style="left:145px;top:407px" width="20" height="20" viewBox="0 0 20 20"><path d="M1 1 H19 V17 L17 19 L14 16 L11 19 L8 16 L5 19 L1 16z" fill="#b4e4f2" stroke="#000" stroke-width="1.4"/><rect x="3" y="3" width="2" height="2" fill="#000"/><rect x="6" y="3" width="2" height="2" fill="#000"/><rect x="11" y="3" width="2" height="2" fill="#000"/><rect x="14" y="3" width="2" height="2" fill="#000"/><rect x="3" y="6" width="2" height="2" fill="#000"/><rect x="6" y="6" width="2" height="2" fill="#000"/><rect x="3" y="9" width="2" height="2" fill="#000"/><rect x="3" y="13" width="2" height="2" fill="#000"/><rect x="6" y="13" width="2" height="2" fill="#000"/><circle cx="11.5" cy="11" r="4.5" fill="#e0f4fa" stroke="#000" stroke-width="1.1" stroke-dasharray="1.5 1"/><rect x="10.5" y="7.5" width="2" height="2" fill="#000"/><rect x="10.5" y="12.5" width="2" height="2" fill="#000"/><path d="M15 14.5 L19 18.5" stroke="#000" stroke-width="2.4"/></svg>
<div class="ibtn" style="left:169px;top:405px;width:24px;height:24px"></div><svg class="a" style="left:171px;top:407px" width="20" height="20" viewBox="0 0 20 20"><path d="M1 1 H19 V17 L17 19 L14 16 L11 19 L8 16 L5 19 L1 16z" fill="#b4e4f2" stroke="#000" stroke-width="1.4"/><rect x="3" y="3" width="5" height="14" fill="#d8b040" stroke="#5a4010" stroke-width=".8"/><rect x="2.5" y="2" width="7" height="2" fill="#f4f4f4" stroke="#888" stroke-width=".5"/><rect x="13" y="3" width="2" height="2" fill="#000"/><rect x="16" y="3" width="2" height="2" fill="#000"/><circle cx="11.5" cy="11" r="4.5" fill="#e0f4fa" stroke="#000" stroke-width="1.1" stroke-dasharray="1.5 1"/><rect x="10.5" y="7.5" width="2" height="2" fill="#000"/><rect x="10.5" y="12.5" width="2" height="2" fill="#000"/><path d="M15 14.5 L19 18.5" stroke="#000" stroke-width="2.4"/></svg>
<div class="btn" style="left:204px;top:406px;width:73px;height:18px;line-height:17px">Сброс</div>
<div class="grp" style="left:130px;top:444px;width:551px;height:228px"></div>
<div class="gl" style="left:138px;top:438px">Траектория</div>
<div class="grp" style="left:139px;top:460px;width:533px;height:37px"></div>
<div class="gl" style="left:146px;top:454px">Инструмент</div>
<div class="t r" style="left:-47px;width:300px;top:473px;">No.инструмента</div>
<div class="fld" style="left:259px;top:470px;width:51px;height:20px;"><span style="left:5px;top:2px">1</span></div>
<div class="t r" style="left:123px;width:300px;top:473px;">Общая длина</div>
<div class="fld" style="left:428px;top:470px;width:38px;height:20px;"><span style="left:4px;top:2px">60,0</span></div>
<div class="t r" style="left:256px;width:300px;top:473px;">ID</div>
<div class="fld" style="left:557px;top:470px;width:107px;height:20px;"><span style="left:5px;top:2px">1</span></div>
<div class="grp" style="left:139px;top:511px;width:533px;height:65px"></div>
<div class="gl" style="left:146px;top:505px">Коррекция инструмента</div>
<div class="t r" style="left:30px;width:300px;top:524px;">Длина</div>
<div class="dd" style="left:337px;top:520px;width:51px;height:22px"><span style="top:3px;width:25px">Выключено</span><div class="arr" style="left:36px;top:9px"></div></div>
<div class="dis" style="left:394px;top:520px;width:51px;height:20px"><span style="top:2px">0</span></div>
<div class="dis" style="left:394px;top:548px;width:51px;height:20px"><span style="top:2px"></span></div>
<div class="t r" style="left:213px;width:300px;top:523px;">Радиус</div>
<div class="dd" style="left:518px;top:520px;width:92px;height:22px"><span style="top:3px;width:70px">Нет</span><div class="arr" style="left:77px;top:9px"></div></div>
<div class="dis" style="left:613px;top:520px;width:51px;height:20px"><span style="top:2px">0</span></div>
<div class="dis" style="left:613px;top:548px;width:51px;height:20px"><span style="top:2px"></span></div>
<div class="t r" style="left:89px;width:300px;top:590px;">Вывод циклов</div>
<div class="dd" style="left:395px;top:587px;width:51px;height:22px"><span style="top:3px;width:29px">Вкл</span><div class="arr" style="left:36px;top:9px"></div></div>
<div class="t r" style="left:254px;width:300px;top:590px;">Охлаждение</div>
<div class="dd" style="left:560px;top:587px;width:104px;height:22px"><span style="top:3px;width:82px">Стандартное</span><div class="arr" style="left:89px;top:9px"></div></div>
<div class="t r" style="left:67px;width:300px;top:619px;">Смещения детали</div>
<div class="dd" style="left:375px;top:615px;width:71px;height:22px"><span style="top:3px;width:49px">None</span><div class="arr" style="left:56px;top:9px"></div></div>
<div class="ibtn" style="left:454px;top:615px;width:24px;height:24px"></div><svg class="a" style="left:456px;top:617px" width="20" height="20" viewBox="0 0 20 20"><path d="M1 1 H19 V17 L17 19 L14 16 L11 19 L8 16 L5 19 L1 16z" fill="#b4e4f2" stroke="#000" stroke-width="1.3"/><path d="M2 3h1M2 6h1M2 9h1M2 12h1M17 3h1M17 6h1" stroke="#102030" stroke-width="1.3"/><path d="M5 6 L10 3 L15 6 L15 13 L10 16 L5 13z" fill="#3aa8b8" stroke="#102030"/><path d="M5 6 L10 9 L15 6 M10 9 V16" fill="none" stroke="#102030"/><path d="M11 11 H17 M15 9 L18 11 L15 13" fill="none" stroke="#30b030" stroke-width="1.6"/></svg>
<div class="ibtn" style="left:641px;top:615px;width:24px;height:24px"></div><svg class="a" style="left:643px;top:617px" width="20" height="20" viewBox="0 0 20 20"><rect x="1" y="1" width="18" height="18" fill="#7ed2ec" stroke="#000" stroke-width="1.3"/><text x="10" y="9" font-size="7" font-weight="bold" text-anchor="middle" fill="#102040" font-family="Liberation Sans">abc</text><text x="10" y="17" font-size="7.5" font-weight="bold" text-anchor="middle" fill="#102040" font-family="Liberation Sans">123</text></svg>
<div class="t r" style="left:28px;width:300px;top:647px;color:#a0a0a0">Файл вывода</div>
<div class="dis" style="left:334px;top:642px;width:332px;height:20px"><span style="top:2px"></span></div>
<div class="btn" style="left:234px;top:682px;width:73px;height:23px;line-height:20px">Записать</div>
<div class="btn" style="left:324px;top:682px;width:73px;height:23px;line-height:20px">Выполнить</div>
<div class="btn" style="left:414px;top:682px;width:73px;height:23px;line-height:20px">Принять</div>
<div class="btn" style="left:504px;top:682px;width:73px;height:23px;line-height:20px">Закрыть</div>
</div>


</body></html>
